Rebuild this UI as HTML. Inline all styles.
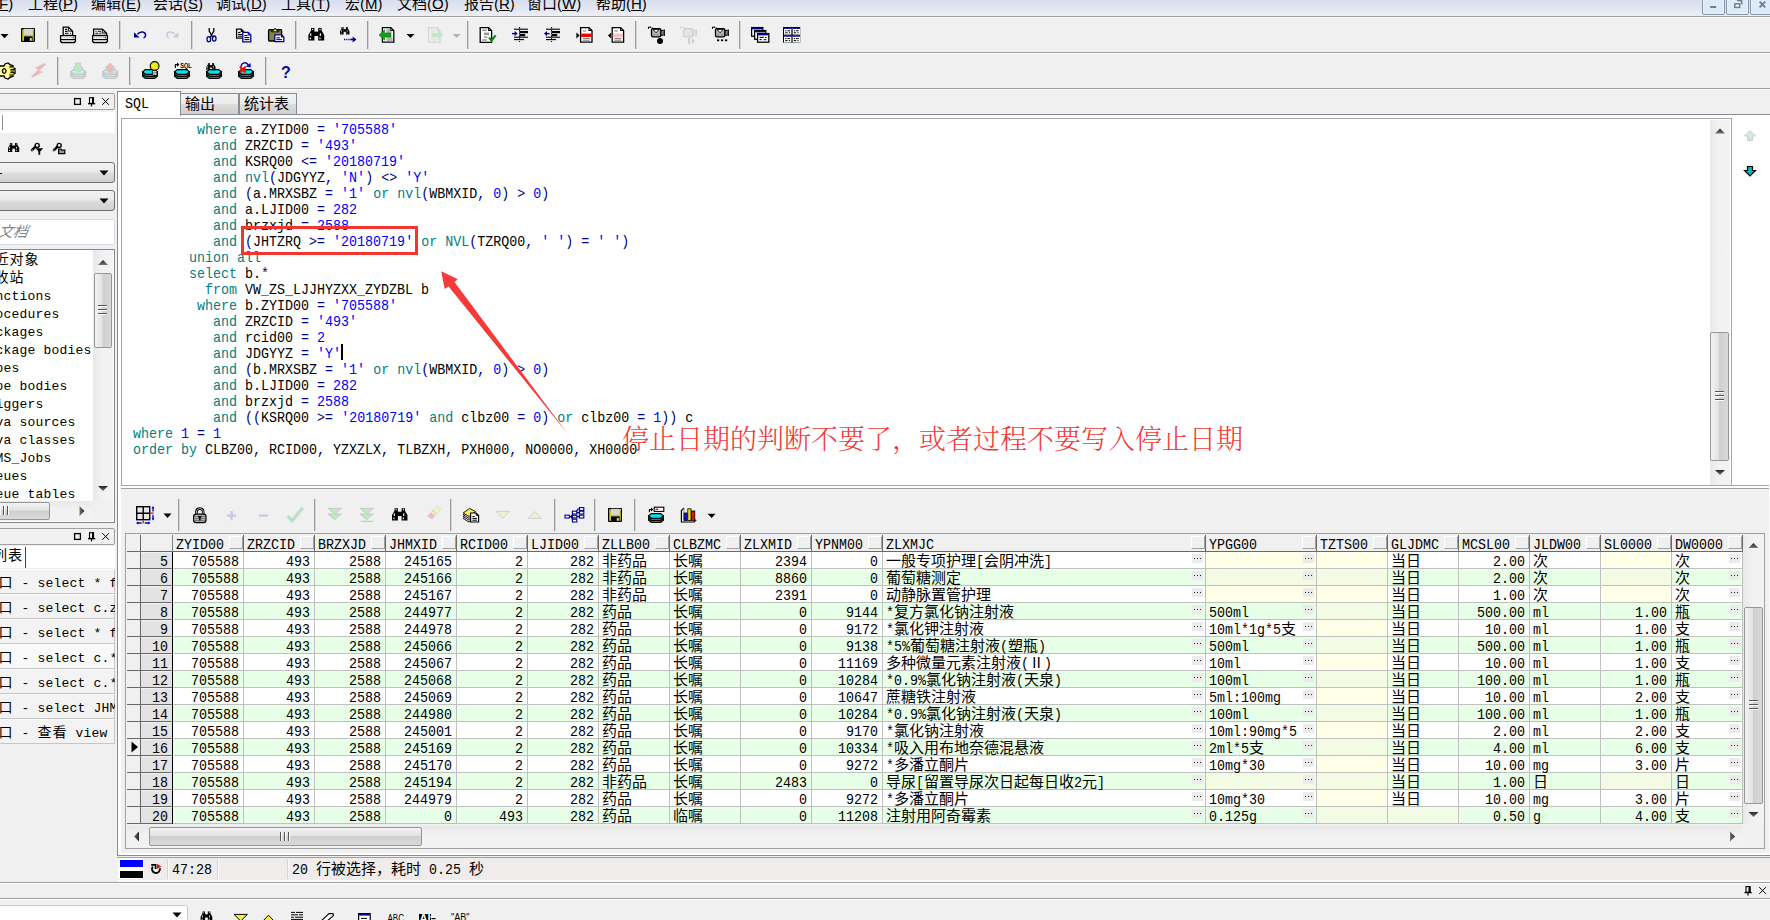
<!DOCTYPE html><html lang="zh"><head><meta charset="utf-8"><title>PL/SQL Developer</title><style>
*{box-sizing:border-box}
html,body{margin:0;padding:0}
body{width:1770px;height:920px;overflow:hidden;background:#f0f0f0;position:relative;font-family:"Liberation Mono","Noto Sans CJK SC",monospace;color:#000}
.a{position:absolute}
.hl{position:absolute;left:0;width:1770px;height:1px}
.mono{font-family:"Liberation Mono","Noto Sans CJK SC",monospace;font-size:15px;white-space:pre}
.sl{transform:scaleX(.8889);transform-origin:0 0}.sr{transform:scaleX(.8889);transform-origin:100% 0}
.l{display:inline-block;vertical-align:baseline;white-space:pre}.l>span{display:inline-block;transform:scaleX(.8889);transform-origin:0 0;white-space:pre}
.cj{font-family:"Liberation Mono","Noto Sans CJK SC",sans-serif;font-size:15px;letter-spacing:0;line-height:0}
.menu{font-family:"Liberation Sans","Noto Sans CJK SC",sans-serif;font-size:15px;white-space:pre;letter-spacing:0}
.menu u{text-decoration-thickness:1px;text-underline-offset:1px}
.sep{position:absolute;width:2px;border-left:1px solid #a0a0a0;border-right:1px solid #fff}
.eb{width:11px;height:9px;background:#ebebeb}.eb i{position:absolute;left:2px;top:4px;width:1.4px;height:1.4px;background:#222;box-shadow:3px 0 0 #222,6px 0 0 #222}
.kw{color:#008080}.bl{color:#0000ff}.pu{color:#000080}
.small{font-family:"Liberation Mono","Noto Sans CJK SC",monospace;font-size:13px;letter-spacing:0.2px;white-space:pre}
.small .cj{font-size:14px;letter-spacing:1px}
</style></head><body>
<div class="a" style="left:0;top:0;width:1770px;height:16px;background:linear-gradient(#d9deee,#e2e6f2 50%,#eef0f8)"></div>
<div class="hl" style="top:16px;background:#a0a0a0"></div><div class="hl" style="top:17px;background:#fff"></div>
<div class="a" style="left:1702px;top:-4px;width:23px;height:19px;border:1px solid #8595a9;border-radius:2px;background:#deeaf6;box-shadow:inset 0 0 0 1px #eaf2fa"></div>
<div class="a" style="left:1726px;top:-4px;width:23px;height:19px;border:1px solid #8595a9;border-radius:2px;background:#deeaf6;box-shadow:inset 0 0 0 1px #eaf2fa"></div>
<div class="a" style="left:1750px;top:-4px;width:23px;height:19px;border:1px solid #8595a9;border-radius:2px;background:#deeaf6;box-shadow:inset 0 0 0 1px #eaf2fa"></div>
<svg class="a" style="left:1700px;top:0" width="70" height="16"><rect x="10.2" y="6" width="6" height="2" fill="#6e7e90"/><path d="M37,0.5h4.6v4" fill="none" stroke="#6e7e90" stroke-width="1.6"/><rect x="34.8" y="3.8" width="4.8" height="3.6" fill="#fff" stroke="#6e7e90" stroke-width="1.5"/><path d="M59.6,1.6l5.6,5.8M65.2,1.6l-5.6,5.8" stroke="#6e7e90" stroke-width="1.9"/></svg>
<div class="a menu" style="left:-6px;top:-7px;line-height:22px">(<u>F</u>)</div>
<div class="a menu" style="left:28px;top:-7px;line-height:22px">工程(<u>P</u>)</div>
<div class="a menu" style="left:91px;top:-7px;line-height:22px">编辑(<u>E</u>)</div>
<div class="a menu" style="left:153px;top:-7px;line-height:22px">会话(<u>S</u>)</div>
<div class="a menu" style="left:216px;top:-7px;line-height:22px">调试(<u>D</u>)</div>
<div class="a menu" style="left:281px;top:-7px;line-height:22px">工具(<u>T</u>)</div>
<div class="a menu" style="left:345px;top:-7px;line-height:22px">宏(<u>M</u>)</div>
<div class="a menu" style="left:397px;top:-7px;line-height:22px">文档(<u>O</u>)</div>
<div class="a menu" style="left:464px;top:-7px;line-height:22px">报告(<u>R</u>)</div>
<div class="a menu" style="left:527px;top:-7px;line-height:22px">窗口(<u>W</u>)</div>
<div class="a menu" style="left:596px;top:-7px;line-height:22px">帮助(<u>H</u>)</div>
<div class="hl" style="top:52px;background:#a0a0a0"></div><div class="hl" style="top:53px;background:#fff"></div>
<div class="hl" style="top:88px;background:#a0a0a0"></div><div class="hl" style="top:89px;background:#fff"></div>
<div class="a" style="left:-2px;top:93px;width:117px;height:17px;border:1px solid #a0a0a0;border-radius:2px;background:#f0f0f0"></div>
<svg class="a" style="left:72px;top:96px" width="42" height="12"><rect x="2.6" y="2.6" width="5.8" height="5.8" fill="none" stroke="#000" stroke-width="1.3"/><rect x="17.5" y="1.7" width="4" height="5.6" fill="#f0f0f0" stroke="#000" stroke-width="1.1"/><rect x="20" y="1.4" width="2" height="6" fill="#000"/><path d="M16,7.7h7.2" stroke="#000" stroke-width="1.3"/><path d="M19.5,8v2.4" stroke="#000" stroke-width="1.2"/><path d="M30.3,2.2l6.6,6.6M36.9,2.2l-6.6,6.6" stroke="#000" stroke-width="1" fill="none"/></svg>
<div class="a" style="left:0;top:112px;width:115px;height:21px;background:#fff"></div>
<div class="a" style="left:2px;top:115px;width:1px;height:15px;background:#909090"></div>
<div class="a" style="left:-4px;top:162px;width:119px;height:21px;border:1px solid #707070;border-radius:3px;background:linear-gradient(#f2f2f2,#ebebeb 48%,#dddddd 52%,#cfcfcf)"></div>
<svg class="a" style="left:99px;top:170px" width="10" height="6"><polygon points="0.5,0.5 9.5,0.5 5,5.5" fill="#000"/></svg>
<div class="a" style="left:-4px;top:190px;width:119px;height:21px;border:1px solid #707070;border-radius:3px;background:linear-gradient(#f2f2f2,#ebebeb 48%,#dddddd 52%,#cfcfcf)"></div>
<svg class="a" style="left:99px;top:198px" width="10" height="6"><polygon points="0.5,0.5 9.5,0.5 5,5.5" fill="#000"/></svg>
<div class="a" style="left:0;top:173px;width:2px;height:1px;background:#0000a0"></div>
<div class="a" style="left:-2px;top:219px;width:117px;height:26px;border:1px solid #d5dbe6;border-radius:2px;background:#fff"></div>
<div class="a" style="left:-2px;top:222px;font:italic 15px/20px 'Liberation Sans','Noto Sans CJK SC',sans-serif;color:#8a8a8a;transform:skewX(-12deg)">文档</div>
<div class="a" style="left:-2px;top:249px;width:117px;height:274px;border:1px solid #828790;background:#fff"></div>
<div class="a" style="left:0;top:250px;width:93px;height:251px;overflow:hidden">
<div class="a small" style="left:-20.5px;top:2px;line-height:18px"><span class="cj">最近对象</span></div>
<div class="a small" style="left:-20.5px;top:20px;line-height:18px"><span class="cj">回收站</span></div>
<div class="a small" style="left:-20.5px;top:38px;line-height:18px">Functions</div>
<div class="a small" style="left:-20.5px;top:56px;line-height:18px">Procedures</div>
<div class="a small" style="left:-20.5px;top:74px;line-height:18px">Packages</div>
<div class="a small" style="left:-20.5px;top:92px;line-height:18px">Package bodies</div>
<div class="a small" style="left:-20.5px;top:110px;line-height:18px">Types</div>
<div class="a small" style="left:-20.5px;top:128px;line-height:18px">Type bodies</div>
<div class="a small" style="left:-20.5px;top:146px;line-height:18px">Triggers</div>
<div class="a small" style="left:-20.5px;top:164px;line-height:18px">Java sources</div>
<div class="a small" style="left:-20.5px;top:182px;line-height:18px">Java classes</div>
<div class="a small" style="left:-20.5px;top:200px;line-height:18px">DBMS_Jobs</div>
<div class="a small" style="left:-20.5px;top:218px;line-height:18px">Queues</div>
<div class="a small" style="left:-20.5px;top:236px;line-height:18px">Queue tables</div>
</div>
<div class="a" style="left:93px;top:250px;width:20px;height:251px;background:linear-gradient(90deg,#e8e8e8,#f1f1f1 40%,#f3f3f3)"></div>
<svg class="a" style="left:93px;top:250px" width="20" height="251"><polygon points="5,15 10,10 15,15" fill="url(#ag)"/><polygon points="5,236 15,236 10,241" fill="url(#ag)"/></svg>
<div class="a" style="left:94px;top:273px;width:18px;height:75px;border:1px solid #979797;border-radius:2px;background:linear-gradient(90deg,#f3f3f3,#e2e2e2 45%,#cfcfcf 50%,#d9d9d9)"></div>
<div class="a" style="left:98px;top:305px;width:9px;height:2px;background:#555;border-bottom:1px solid #fff"></div>
<div class="a" style="left:98px;top:309px;width:9px;height:2px;background:#555;border-bottom:1px solid #fff"></div>
<div class="a" style="left:98px;top:313px;width:9px;height:2px;background:#555;border-bottom:1px solid #fff"></div>
<div class="a" style="left:0;top:501px;width:93px;height:20px;background:linear-gradient(#e8e8e8,#f1f1f1 40%,#f3f3f3)"></div>
<div class="a" style="left:93px;top:501px;width:20px;height:20px;background:#f0f0f0"></div>
<div class="a" style="left:-3px;top:502px;width:53px;height:18px;border:1px solid #979797;border-radius:2px;background:linear-gradient(#f3f3f3,#e2e2e2 45%,#cfcfcf 50%,#d9d9d9)"></div>
<div class="a" style="left:-1px;top:506px;width:2px;height:9px;background:#555;border-right:1px solid #fff"></div>
<div class="a" style="left:3px;top:506px;width:2px;height:9px;background:#555;border-right:1px solid #fff"></div>
<div class="a" style="left:7px;top:506px;width:2px;height:9px;background:#555;border-right:1px solid #fff"></div>
<svg class="a" style="left:76px;top:501px" width="12" height="20"><polygon points="3.5,5 3.5,15 8.5,10" fill="url(#ah)"/></svg>
<div class="a" style="left:-2px;top:528px;width:117px;height:17px;border:1px solid #a0a0a0;border-radius:2px;background:#f0f0f0"></div>
<svg class="a" style="left:72px;top:531px" width="42" height="12"><rect x="2.6" y="2.6" width="5.8" height="5.8" fill="none" stroke="#000" stroke-width="1.3"/><rect x="17.5" y="1.7" width="4" height="5.6" fill="#f0f0f0" stroke="#000" stroke-width="1.1"/><rect x="20" y="1.4" width="2" height="6" fill="#000"/><path d="M16,7.7h7.2" stroke="#000" stroke-width="1.3"/><path d="M19.5,8v2.4" stroke="#000" stroke-width="1.2"/><path d="M30.3,2.2l6.6,6.6M36.9,2.2l-6.6,6.6" stroke="#000" stroke-width="1" fill="none"/></svg>
<div class="a" style="left:0;top:546px;width:115px;height:22px;background:#fff"></div>
<div class="a small" style="left:-7px;top:548px;line-height:18px"><span class="cj">列表</span></div>
<div class="a" style="left:25px;top:547px;width:1px;height:21px;background:#404040"></div>
<div class="a" style="left:0;top:569px;width:115px;height:176px;overflow:hidden">
<div class="a" style="left:-2px;top:0px;width:117px;height:25px;background:#f3f3f3;border:1px solid #c6c6c6;border-top-color:#fafafa"></div>
<div class="a small" style="left:-1.5px;top:6px;line-height:18px"><span class="cj">口</span> - select * f</div>
<div class="a" style="left:-2px;top:25px;width:117px;height:25px;background:#f3f3f3;border:1px solid #c6c6c6;border-top-color:#fafafa"></div>
<div class="a small" style="left:-1.5px;top:31px;line-height:18px"><span class="cj">口</span> - select c.z</div>
<div class="a" style="left:-2px;top:50px;width:117px;height:25px;background:#f3f3f3;border:1px solid #c6c6c6;border-top-color:#fafafa"></div>
<div class="a small" style="left:-1.5px;top:56px;line-height:18px"><span class="cj">口</span> - select * f</div>
<div class="a" style="left:-2px;top:75px;width:117px;height:25px;background:#f9f9f9;border:1px solid #c6c6c6;border-top-color:#fafafa"></div>
<div class="a small" style="left:-1.5px;top:81px;line-height:18px"><span class="cj">口</span> - select c.*</div>
<div class="a" style="left:-2px;top:100px;width:117px;height:25px;background:#f3f3f3;border:1px solid #c6c6c6;border-top-color:#fafafa"></div>
<div class="a small" style="left:-1.5px;top:106px;line-height:18px"><span class="cj">口</span> - select c.*</div>
<div class="a" style="left:-2px;top:125px;width:117px;height:25px;background:#f3f3f3;border:1px solid #c6c6c6;border-top-color:#fafafa"></div>
<div class="a small" style="left:-1.5px;top:131px;line-height:18px"><span class="cj">口</span> - select JHM</div>
<div class="a" style="left:-2px;top:150px;width:117px;height:25px;background:#f3f3f3;border:1px solid #c6c6c6;border-top-color:#fafafa"></div>
<div class="a small" style="left:-1.5px;top:156px;line-height:18px"><span class="cj">口</span> - <span class="cj">查看</span> view</div>
</div>
<div class="a" style="left:117px;top:114px;width:1653px;height:742px;background:#fff;border-left:1px solid #898c95;border-top:1px solid #898c95;border-bottom:1px solid #898c95"></div>
<div class="a" style="left:180px;top:93px;width:59px;height:22px;border:1px solid #898c95;background:linear-gradient(#f2f2f2,#ebebeb 50%,#dddddd 51%,#cfcfcf)"></div>
<div class="a mono" style="left:185px;top:96px;line-height:20px"><span class="cj">输出</span></div>
<div class="a" style="left:239px;top:93px;width:58px;height:22px;border:1px solid #898c95;background:linear-gradient(#f2f2f2,#ebebeb 50%,#dddddd 51%,#cfcfcf)"></div>
<div class="a mono" style="left:244px;top:96px;line-height:20px"><span class="cj">统计表</span></div>
<div class="a" style="left:117px;top:91px;width:64px;height:25px;border:1px solid #898c95;border-bottom:none;background:#fff"></div>
<div class="a mono sl" style="left:125px;top:95px;line-height:20px">SQL</div>
<div class="a" style="left:121px;top:488px;width:1648px;height:365px;background:#f0f0f0;border-top:1px solid #a0a0a0"></div>
<div class="a" style="left:121px;top:118px;width:1611px;height:368px;border:1px solid #a3a7b0;background:#fff"></div>
<pre class="a mono sl" style="left:133px;top:123px;margin:0;line-height:16px">        <span class="kw">where</span> a.ZYID00 <span class="pu">=</span> <span class="bl">'705588'</span>
          <span class="kw">and</span> ZRZCID <span class="pu">=</span> <span class="bl">'493'</span>
          <span class="kw">and</span> KSRQ00 <span class="pu">&lt;</span><span class="pu">=</span> <span class="bl">'20180719'</span>
          <span class="kw">and</span> <span class="kw">nvl</span><span class="pu">(</span>JDGYYZ<span class="pu">,</span> <span class="bl">'N'</span><span class="pu">)</span> <span class="pu">&lt;</span><span class="pu">&gt;</span> <span class="bl">'Y'</span>
          <span class="kw">and</span> <span class="pu">(</span>a.MRXSBZ <span class="pu">=</span> <span class="bl">'1'</span> <span class="kw">or</span> <span class="kw">nvl</span><span class="pu">(</span>WBMXID<span class="pu">,</span> <span class="bl">0</span><span class="pu">)</span> <span class="pu">&gt;</span> <span class="bl">0</span><span class="pu">)</span>
          <span class="kw">and</span> a.LJID00 <span class="pu">=</span> <span class="bl">282</span>
          <span class="kw">and</span> brzxjd <span class="pu">=</span> <span class="bl">2588</span>
          <span class="kw">and</span> <span class="pu">(</span>JHTZRQ <span class="pu">&gt;</span><span class="pu">=</span> <span class="bl">'20180719'</span> <span class="kw">or</span> <span class="kw">NVL</span><span class="pu">(</span>TZRQ00<span class="pu">,</span> <span class="bl">' '</span><span class="pu">)</span> <span class="pu">=</span> <span class="bl">' '</span><span class="pu">)</span>
       <span class="kw">union</span> <span class="kw">all</span>
       <span class="kw">select</span> b.<span class="pu">*</span>
         <span class="kw">from</span> VW_ZS_LJJHYZXX_ZYDZBL b
        <span class="kw">where</span> b.ZYID00 <span class="pu">=</span> <span class="bl">'705588'</span>
          <span class="kw">and</span> ZRZCID <span class="pu">=</span> <span class="bl">'493'</span>
          <span class="kw">and</span> rcid00 <span class="pu">=</span> <span class="bl">2</span>
          <span class="kw">and</span> JDGYYZ <span class="pu">=</span> <span class="bl">'Y'</span>
          <span class="kw">and</span> <span class="pu">(</span>b.MRXSBZ <span class="pu">=</span> <span class="bl">'1'</span> <span class="kw">or</span> <span class="kw">nvl</span><span class="pu">(</span>WBMXID<span class="pu">,</span> <span class="bl">0</span><span class="pu">)</span> <span class="pu">&gt;</span> <span class="bl">0</span><span class="pu">)</span>
          <span class="kw">and</span> b.LJID00 <span class="pu">=</span> <span class="bl">282</span>
          <span class="kw">and</span> brzxjd <span class="pu">=</span> <span class="bl">2588</span>
          <span class="kw">and</span> <span class="pu">(</span><span class="pu">(</span>KSRQ00 <span class="pu">&gt;</span><span class="pu">=</span> <span class="bl">'20180719'</span> <span class="kw">and</span> clbz00 <span class="pu">=</span> <span class="bl">0</span><span class="pu">)</span> <span class="kw">or</span> clbz00 <span class="pu">=</span> <span class="bl">1</span><span class="pu">)</span><span class="pu">)</span> c
<span class="kw">where</span> <span class="bl">1</span> <span class="pu">=</span> <span class="bl">1</span>
<span class="kw">order</span> <span class="kw">by</span> CLBZ00<span class="pu">,</span> RCID00<span class="pu">,</span> YZXZLX<span class="pu">,</span> TLBZXH<span class="pu">,</span> PXH000<span class="pu">,</span> NO0000<span class="pu">,</span> XH0000</pre>
<div class="a" style="left:341px;top:344px;width:2px;height:16px;background:#000"></div>
<div class="a" style="left:241px;top:226px;width:177px;height:29px;border:3px solid #f3352f"></div>
<svg class="a" style="left:430px;top:260px" width="160" height="180" viewBox="430 260 160 180"><polygon points="441.2,271.2 457.8,279.2 454.5,282 567.6,433.8 448.6,286.4 444.7,289" fill="#f53a3a"/></svg>
<div class="a" style="left:622px;top:422px;font:300 27px/36px 'Liberation Serif','Noto Serif CJK SC',serif;color:#f23a35;white-space:pre">停止日期的判断不要了，或者过程不要写入停止日期</div>
<div class="a" style="left:1710px;top:120px;width:20px;height:365px;background:linear-gradient(90deg,#e8e8e8,#f1f1f1 40%,#f3f3f3)"></div>
<svg class="a" style="left:1710px;top:120px" width="20" height="365"><defs><linearGradient id="ag" x1="0" y1="0" x2="0" y2="1"><stop offset="0" stop-color="#222"/><stop offset="1" stop-color="#777"/></linearGradient></defs><polygon points="5,13.5 10,8.5 15,13.5" fill="url(#ag)"/><polygon points="5,350 15,350 10,355" fill="url(#ag)"/></svg>
<div class="a" style="left:1710px;top:332px;width:19px;height:129px;border:1px solid #979797;border-radius:2px;background:linear-gradient(90deg,#f3f3f3,#e2e2e2 45%,#cfcfcf 50%,#d9d9d9)"></div>
<div class="a" style="left:1715px;top:391px;width:9px;height:2px;background:#555;border-bottom:1px solid #fff"></div>
<div class="a" style="left:1715px;top:395px;width:9px;height:2px;background:#555;border-bottom:1px solid #fff"></div>
<div class="a" style="left:1715px;top:399px;width:9px;height:2px;background:#555;border-bottom:1px solid #fff"></div>
<svg class="a" style="left:1742px;top:128px" width="16" height="52"><polygon points="8,2.5 13.5,8 10.5,8 10.5,12.5 5.5,12.5 5.5,8 2.5,8" fill="#cfe9e9" stroke="#c8d0d0" stroke-width="1"/><polygon points="5.5,38.5 10.5,38.5 10.5,42.5 13.5,42.5 8,48 2.5,42.5 5.5,42.5" fill="#00b8c0" stroke="#000" stroke-width="1.2"/></svg>
<div class="a" style="left:125px;top:533px;width:1640px;height:316px;border:1px solid #a0a0a0;background:#f0f0f0"></div>
<div class="a" style="left:127px;top:535px;width:1616px;height:16px;background:#f0f0f0"></div>
<div class="a" style="left:127px;top:551px;width:1616px;height:1px;background:#696969"></div>
<div class="a" style="left:140px;top:535px;width:1px;height:289px;background:#696969"></div>
<div class="a" style="left:172px;top:535px;width:1px;height:17px;background:#808080"></div>
<div class="a" style="left:172px;top:552px;width:1px;height:272px;background:#000"></div>
<div class="a" style="left:243px;top:535px;width:1px;height:16px;background:#696969"></div>
<div class="a mono sl" style="left:176px;top:538px;line-height:16px">ZYID00</div>
<div class="a" style="left:229px;top:536px;width:14px;height:13px;background:#f0f0f0;border-right:1px solid #a0a0a0;border-bottom:1px solid #a0a0a0;border-left:1px solid #fff;border-top:1px solid #fff"></div>
<div class="a" style="left:314px;top:535px;width:1px;height:16px;background:#696969"></div>
<div class="a mono sl" style="left:247px;top:538px;line-height:16px">ZRZCID</div>
<div class="a" style="left:300px;top:536px;width:14px;height:13px;background:#f0f0f0;border-right:1px solid #a0a0a0;border-bottom:1px solid #a0a0a0;border-left:1px solid #fff;border-top:1px solid #fff"></div>
<div class="a" style="left:385px;top:535px;width:1px;height:16px;background:#696969"></div>
<div class="a mono sl" style="left:318px;top:538px;line-height:16px">BRZXJD</div>
<div class="a" style="left:371px;top:536px;width:14px;height:13px;background:#f0f0f0;border-right:1px solid #a0a0a0;border-bottom:1px solid #a0a0a0;border-left:1px solid #fff;border-top:1px solid #fff"></div>
<div class="a" style="left:456px;top:535px;width:1px;height:16px;background:#696969"></div>
<div class="a mono sl" style="left:389px;top:538px;line-height:16px">JHMXID</div>
<div class="a" style="left:442px;top:536px;width:14px;height:13px;background:#f0f0f0;border-right:1px solid #a0a0a0;border-bottom:1px solid #a0a0a0;border-left:1px solid #fff;border-top:1px solid #fff"></div>
<div class="a" style="left:527px;top:535px;width:1px;height:16px;background:#696969"></div>
<div class="a mono sl" style="left:460px;top:538px;line-height:16px">RCID00</div>
<div class="a" style="left:513px;top:536px;width:14px;height:13px;background:#f0f0f0;border-right:1px solid #a0a0a0;border-bottom:1px solid #a0a0a0;border-left:1px solid #fff;border-top:1px solid #fff"></div>
<div class="a" style="left:598px;top:535px;width:1px;height:16px;background:#696969"></div>
<div class="a mono sl" style="left:531px;top:538px;line-height:16px">LJID00</div>
<div class="a" style="left:584px;top:536px;width:14px;height:13px;background:#f0f0f0;border-right:1px solid #a0a0a0;border-bottom:1px solid #a0a0a0;border-left:1px solid #fff;border-top:1px solid #fff"></div>
<div class="a" style="left:669px;top:535px;width:1px;height:16px;background:#696969"></div>
<div class="a mono sl" style="left:602px;top:538px;line-height:16px">ZLLB00</div>
<div class="a" style="left:655px;top:536px;width:14px;height:13px;background:#f0f0f0;border-right:1px solid #a0a0a0;border-bottom:1px solid #a0a0a0;border-left:1px solid #fff;border-top:1px solid #fff"></div>
<div class="a" style="left:740px;top:535px;width:1px;height:16px;background:#696969"></div>
<div class="a mono sl" style="left:673px;top:538px;line-height:16px">CLBZMC</div>
<div class="a" style="left:726px;top:536px;width:14px;height:13px;background:#f0f0f0;border-right:1px solid #a0a0a0;border-bottom:1px solid #a0a0a0;border-left:1px solid #fff;border-top:1px solid #fff"></div>
<div class="a" style="left:811px;top:535px;width:1px;height:16px;background:#696969"></div>
<div class="a mono sl" style="left:744px;top:538px;line-height:16px">ZLXMID</div>
<div class="a" style="left:797px;top:536px;width:14px;height:13px;background:#f0f0f0;border-right:1px solid #a0a0a0;border-bottom:1px solid #a0a0a0;border-left:1px solid #fff;border-top:1px solid #fff"></div>
<div class="a" style="left:882px;top:535px;width:1px;height:16px;background:#696969"></div>
<div class="a mono sl" style="left:815px;top:538px;line-height:16px">YPNM00</div>
<div class="a" style="left:868px;top:536px;width:14px;height:13px;background:#f0f0f0;border-right:1px solid #a0a0a0;border-bottom:1px solid #a0a0a0;border-left:1px solid #fff;border-top:1px solid #fff"></div>
<div class="a" style="left:1205px;top:535px;width:1px;height:16px;background:#696969"></div>
<div class="a mono sl" style="left:886px;top:538px;line-height:16px">ZLXMJC</div>
<div class="a" style="left:1191px;top:536px;width:14px;height:13px;background:#f0f0f0;border-right:1px solid #a0a0a0;border-bottom:1px solid #a0a0a0;border-left:1px solid #fff;border-top:1px solid #fff"></div>
<div class="a" style="left:1316px;top:535px;width:1px;height:16px;background:#696969"></div>
<div class="a mono sl" style="left:1209px;top:538px;line-height:16px">YPGG00</div>
<div class="a" style="left:1302px;top:536px;width:14px;height:13px;background:#f0f0f0;border-right:1px solid #a0a0a0;border-bottom:1px solid #a0a0a0;border-left:1px solid #fff;border-top:1px solid #fff"></div>
<div class="a" style="left:1387px;top:535px;width:1px;height:16px;background:#696969"></div>
<div class="a mono sl" style="left:1320px;top:538px;line-height:16px">TZTS00</div>
<div class="a" style="left:1373px;top:536px;width:14px;height:13px;background:#f0f0f0;border-right:1px solid #a0a0a0;border-bottom:1px solid #a0a0a0;border-left:1px solid #fff;border-top:1px solid #fff"></div>
<div class="a" style="left:1458px;top:535px;width:1px;height:16px;background:#696969"></div>
<div class="a mono sl" style="left:1391px;top:538px;line-height:16px">GLJDMC</div>
<div class="a" style="left:1444px;top:536px;width:14px;height:13px;background:#f0f0f0;border-right:1px solid #a0a0a0;border-bottom:1px solid #a0a0a0;border-left:1px solid #fff;border-top:1px solid #fff"></div>
<div class="a" style="left:1529px;top:535px;width:1px;height:16px;background:#696969"></div>
<div class="a mono sl" style="left:1462px;top:538px;line-height:16px">MCSL00</div>
<div class="a" style="left:1515px;top:536px;width:14px;height:13px;background:#f0f0f0;border-right:1px solid #a0a0a0;border-bottom:1px solid #a0a0a0;border-left:1px solid #fff;border-top:1px solid #fff"></div>
<div class="a" style="left:1600px;top:535px;width:1px;height:16px;background:#696969"></div>
<div class="a mono sl" style="left:1533px;top:538px;line-height:16px">JLDW00</div>
<div class="a" style="left:1586px;top:536px;width:14px;height:13px;background:#f0f0f0;border-right:1px solid #a0a0a0;border-bottom:1px solid #a0a0a0;border-left:1px solid #fff;border-top:1px solid #fff"></div>
<div class="a" style="left:1671px;top:535px;width:1px;height:16px;background:#696969"></div>
<div class="a mono sl" style="left:1604px;top:538px;line-height:16px">SL0000</div>
<div class="a" style="left:1657px;top:536px;width:14px;height:13px;background:#f0f0f0;border-right:1px solid #a0a0a0;border-bottom:1px solid #a0a0a0;border-left:1px solid #fff;border-top:1px solid #fff"></div>
<div class="a" style="left:1742px;top:535px;width:1px;height:16px;background:#696969"></div>
<div class="a mono sl" style="left:1675px;top:538px;line-height:16px">DW0000</div>
<div class="a" style="left:1728px;top:536px;width:14px;height:13px;background:#f0f0f0;border-right:1px solid #a0a0a0;border-bottom:1px solid #a0a0a0;border-left:1px solid #fff;border-top:1px solid #fff"></div>
<div class="a" style="left:127px;top:568px;width:45px;height:1px;background:#696969"></div>
<div class="a" style="left:141px;top:553px;width:31px;height:15px;background:#e3e3e3"></div>
<div class="a mono sr" style="left:141px;top:555px;width:27px;text-align:right;line-height:16px">5</div>
<div class="a" style="left:173px;top:552px;width:1570px;height:16px;background:#fff"></div>
<div class="a" style="left:173px;top:568px;width:1570px;height:1px;background:#c0c0c0"></div>
<div class="a mono sr" style="left:173px;top:555px;width:66px;text-align:right;line-height:16px">705588</div>
<div class="a mono sr" style="left:244px;top:555px;width:66px;text-align:right;line-height:16px">493</div>
<div class="a mono sr" style="left:315px;top:555px;width:66px;text-align:right;line-height:16px">2588</div>
<div class="a mono sr" style="left:386px;top:555px;width:66px;text-align:right;line-height:16px">245165</div>
<div class="a mono sr" style="left:457px;top:555px;width:66px;text-align:right;line-height:16px">2</div>
<div class="a mono sr" style="left:528px;top:555px;width:66px;text-align:right;line-height:16px">282</div>
<div class="a mono" style="left:602px;top:555px;line-height:16px"><span class="cj">非药品</span></div>
<div class="a mono" style="left:673px;top:555px;line-height:16px"><span class="cj">长嘱</span></div>
<div class="a mono sr" style="left:741px;top:555px;width:66px;text-align:right;line-height:16px">2394</div>
<div class="a mono sr" style="left:812px;top:555px;width:66px;text-align:right;line-height:16px">0</div>
<div class="a mono" style="left:886px;top:555px;line-height:16px"><span class="cj">一般专项护理</span><span class="l" style="width:8px"><span>[</span></span><span class="cj">会阴冲洗</span><span class="l" style="width:8px"><span>]</span></span></div>
<div class="a eb" style="left:1192px;top:554px"><i></i></div>
<div class="a" style="left:1206px;top:552px;width:110px;height:16px;background:#ffffe8"></div>
<div class="a eb" style="left:1303px;top:554px"><i></i></div>
<div class="a" style="left:1317px;top:552px;width:70px;height:16px;background:#ffffe8"></div>
<div class="a mono" style="left:1391px;top:555px;line-height:16px"><span class="cj">当日</span></div>
<div class="a mono sr" style="left:1459px;top:555px;width:66px;text-align:right;line-height:16px">2.00</div>
<div class="a mono" style="left:1533px;top:555px;line-height:16px"><span class="cj">次</span></div>
<div class="a" style="left:1601px;top:552px;width:70px;height:16px;background:#ffffe8"></div>
<div class="a mono" style="left:1675px;top:555px;line-height:16px"><span class="cj">次</span></div>
<div class="a eb" style="left:1729px;top:554px"><i></i></div>
<div class="a" style="left:127px;top:585px;width:45px;height:1px;background:#696969"></div>
<div class="a" style="left:141px;top:570px;width:31px;height:15px;background:#e3e3e3"></div>
<div class="a mono sr" style="left:141px;top:572px;width:27px;text-align:right;line-height:16px">6</div>
<div class="a" style="left:173px;top:569px;width:1570px;height:16px;background:#e6ffe6"></div>
<div class="a" style="left:173px;top:585px;width:1570px;height:1px;background:#c0c0c0"></div>
<div class="a mono sr" style="left:173px;top:572px;width:66px;text-align:right;line-height:16px">705588</div>
<div class="a mono sr" style="left:244px;top:572px;width:66px;text-align:right;line-height:16px">493</div>
<div class="a mono sr" style="left:315px;top:572px;width:66px;text-align:right;line-height:16px">2588</div>
<div class="a mono sr" style="left:386px;top:572px;width:66px;text-align:right;line-height:16px">245166</div>
<div class="a mono sr" style="left:457px;top:572px;width:66px;text-align:right;line-height:16px">2</div>
<div class="a mono sr" style="left:528px;top:572px;width:66px;text-align:right;line-height:16px">282</div>
<div class="a mono" style="left:602px;top:572px;line-height:16px"><span class="cj">非药品</span></div>
<div class="a mono" style="left:673px;top:572px;line-height:16px"><span class="cj">长嘱</span></div>
<div class="a mono sr" style="left:741px;top:572px;width:66px;text-align:right;line-height:16px">8860</div>
<div class="a mono sr" style="left:812px;top:572px;width:66px;text-align:right;line-height:16px">0</div>
<div class="a mono" style="left:886px;top:572px;line-height:16px"><span class="cj">葡萄糖测定</span></div>
<div class="a eb" style="left:1192px;top:571px"><i></i></div>
<div class="a" style="left:1206px;top:569px;width:110px;height:16px;background:#f3fbe5"></div>
<div class="a eb" style="left:1303px;top:571px"><i></i></div>
<div class="a" style="left:1317px;top:569px;width:70px;height:16px;background:#f3fbe5"></div>
<div class="a mono" style="left:1391px;top:572px;line-height:16px"><span class="cj">当日</span></div>
<div class="a mono sr" style="left:1459px;top:572px;width:66px;text-align:right;line-height:16px">2.00</div>
<div class="a mono" style="left:1533px;top:572px;line-height:16px"><span class="cj">次</span></div>
<div class="a" style="left:1601px;top:569px;width:70px;height:16px;background:#f3fbe5"></div>
<div class="a mono" style="left:1675px;top:572px;line-height:16px"><span class="cj">次</span></div>
<div class="a eb" style="left:1729px;top:571px"><i></i></div>
<div class="a" style="left:127px;top:602px;width:45px;height:1px;background:#696969"></div>
<div class="a" style="left:141px;top:587px;width:31px;height:15px;background:#e3e3e3"></div>
<div class="a mono sr" style="left:141px;top:589px;width:27px;text-align:right;line-height:16px">7</div>
<div class="a" style="left:173px;top:586px;width:1570px;height:16px;background:#fff"></div>
<div class="a" style="left:173px;top:602px;width:1570px;height:1px;background:#c0c0c0"></div>
<div class="a mono sr" style="left:173px;top:589px;width:66px;text-align:right;line-height:16px">705588</div>
<div class="a mono sr" style="left:244px;top:589px;width:66px;text-align:right;line-height:16px">493</div>
<div class="a mono sr" style="left:315px;top:589px;width:66px;text-align:right;line-height:16px">2588</div>
<div class="a mono sr" style="left:386px;top:589px;width:66px;text-align:right;line-height:16px">245167</div>
<div class="a mono sr" style="left:457px;top:589px;width:66px;text-align:right;line-height:16px">2</div>
<div class="a mono sr" style="left:528px;top:589px;width:66px;text-align:right;line-height:16px">282</div>
<div class="a mono" style="left:602px;top:589px;line-height:16px"><span class="cj">非药品</span></div>
<div class="a mono" style="left:673px;top:589px;line-height:16px"><span class="cj">长嘱</span></div>
<div class="a mono sr" style="left:741px;top:589px;width:66px;text-align:right;line-height:16px">2391</div>
<div class="a mono sr" style="left:812px;top:589px;width:66px;text-align:right;line-height:16px">0</div>
<div class="a mono" style="left:886px;top:589px;line-height:16px"><span class="cj">动静脉置管护理</span></div>
<div class="a eb" style="left:1192px;top:588px"><i></i></div>
<div class="a" style="left:1206px;top:586px;width:110px;height:16px;background:#ffffe8"></div>
<div class="a eb" style="left:1303px;top:588px"><i></i></div>
<div class="a" style="left:1317px;top:586px;width:70px;height:16px;background:#ffffe8"></div>
<div class="a mono" style="left:1391px;top:589px;line-height:16px"><span class="cj">当日</span></div>
<div class="a mono sr" style="left:1459px;top:589px;width:66px;text-align:right;line-height:16px">1.00</div>
<div class="a mono" style="left:1533px;top:589px;line-height:16px"><span class="cj">次</span></div>
<div class="a" style="left:1601px;top:586px;width:70px;height:16px;background:#ffffe8"></div>
<div class="a mono" style="left:1675px;top:589px;line-height:16px"><span class="cj">次</span></div>
<div class="a eb" style="left:1729px;top:588px"><i></i></div>
<div class="a" style="left:127px;top:619px;width:45px;height:1px;background:#696969"></div>
<div class="a" style="left:141px;top:604px;width:31px;height:15px;background:#e3e3e3"></div>
<div class="a mono sr" style="left:141px;top:606px;width:27px;text-align:right;line-height:16px">8</div>
<div class="a" style="left:173px;top:603px;width:1570px;height:16px;background:#e6ffe6"></div>
<div class="a" style="left:173px;top:619px;width:1570px;height:1px;background:#c0c0c0"></div>
<div class="a mono sr" style="left:173px;top:606px;width:66px;text-align:right;line-height:16px">705588</div>
<div class="a mono sr" style="left:244px;top:606px;width:66px;text-align:right;line-height:16px">493</div>
<div class="a mono sr" style="left:315px;top:606px;width:66px;text-align:right;line-height:16px">2588</div>
<div class="a mono sr" style="left:386px;top:606px;width:66px;text-align:right;line-height:16px">244977</div>
<div class="a mono sr" style="left:457px;top:606px;width:66px;text-align:right;line-height:16px">2</div>
<div class="a mono sr" style="left:528px;top:606px;width:66px;text-align:right;line-height:16px">282</div>
<div class="a mono" style="left:602px;top:606px;line-height:16px"><span class="cj">药品</span></div>
<div class="a mono" style="left:673px;top:606px;line-height:16px"><span class="cj">长嘱</span></div>
<div class="a mono sr" style="left:741px;top:606px;width:66px;text-align:right;line-height:16px">0</div>
<div class="a mono sr" style="left:812px;top:606px;width:66px;text-align:right;line-height:16px">9144</div>
<div class="a mono" style="left:886px;top:606px;line-height:16px"><span class="l" style="width:8px"><span>*</span></span><span class="cj">复方氯化钠注射液</span></div>
<div class="a eb" style="left:1192px;top:605px"><i></i></div>
<div class="a mono sl" style="left:1209px;top:606px;line-height:16px">500ml</div>
<div class="a eb" style="left:1303px;top:605px"><i></i></div>
<div class="a" style="left:1317px;top:603px;width:70px;height:16px;background:#f3fbe5"></div>
<div class="a mono" style="left:1391px;top:606px;line-height:16px"><span class="cj">当日</span></div>
<div class="a mono sr" style="left:1459px;top:606px;width:66px;text-align:right;line-height:16px">500.00</div>
<div class="a mono sl" style="left:1533px;top:606px;line-height:16px">ml</div>
<div class="a mono sr" style="left:1601px;top:606px;width:66px;text-align:right;line-height:16px">1.00</div>
<div class="a mono" style="left:1675px;top:606px;line-height:16px"><span class="cj">瓶</span></div>
<div class="a eb" style="left:1729px;top:605px"><i></i></div>
<div class="a" style="left:127px;top:636px;width:45px;height:1px;background:#696969"></div>
<div class="a" style="left:141px;top:621px;width:31px;height:15px;background:#e3e3e3"></div>
<div class="a mono sr" style="left:141px;top:623px;width:27px;text-align:right;line-height:16px">9</div>
<div class="a" style="left:173px;top:620px;width:1570px;height:16px;background:#fff"></div>
<div class="a" style="left:173px;top:636px;width:1570px;height:1px;background:#c0c0c0"></div>
<div class="a mono sr" style="left:173px;top:623px;width:66px;text-align:right;line-height:16px">705588</div>
<div class="a mono sr" style="left:244px;top:623px;width:66px;text-align:right;line-height:16px">493</div>
<div class="a mono sr" style="left:315px;top:623px;width:66px;text-align:right;line-height:16px">2588</div>
<div class="a mono sr" style="left:386px;top:623px;width:66px;text-align:right;line-height:16px">244978</div>
<div class="a mono sr" style="left:457px;top:623px;width:66px;text-align:right;line-height:16px">2</div>
<div class="a mono sr" style="left:528px;top:623px;width:66px;text-align:right;line-height:16px">282</div>
<div class="a mono" style="left:602px;top:623px;line-height:16px"><span class="cj">药品</span></div>
<div class="a mono" style="left:673px;top:623px;line-height:16px"><span class="cj">长嘱</span></div>
<div class="a mono sr" style="left:741px;top:623px;width:66px;text-align:right;line-height:16px">0</div>
<div class="a mono sr" style="left:812px;top:623px;width:66px;text-align:right;line-height:16px">9172</div>
<div class="a mono" style="left:886px;top:623px;line-height:16px"><span class="l" style="width:8px"><span>*</span></span><span class="cj">氯化钾注射液</span></div>
<div class="a eb" style="left:1192px;top:622px"><i></i></div>
<div class="a mono" style="left:1209px;top:623px;line-height:16px"><span class="l" style="width:72px"><span>10ml*1g*5</span></span><span class="cj">支</span></div>
<div class="a eb" style="left:1303px;top:622px"><i></i></div>
<div class="a" style="left:1317px;top:620px;width:70px;height:16px;background:#ffffe8"></div>
<div class="a mono" style="left:1391px;top:623px;line-height:16px"><span class="cj">当日</span></div>
<div class="a mono sr" style="left:1459px;top:623px;width:66px;text-align:right;line-height:16px">10.00</div>
<div class="a mono sl" style="left:1533px;top:623px;line-height:16px">ml</div>
<div class="a mono sr" style="left:1601px;top:623px;width:66px;text-align:right;line-height:16px">1.00</div>
<div class="a mono" style="left:1675px;top:623px;line-height:16px"><span class="cj">支</span></div>
<div class="a eb" style="left:1729px;top:622px"><i></i></div>
<div class="a" style="left:127px;top:653px;width:45px;height:1px;background:#696969"></div>
<div class="a" style="left:141px;top:638px;width:31px;height:15px;background:#e3e3e3"></div>
<div class="a mono sr" style="left:141px;top:640px;width:27px;text-align:right;line-height:16px">10</div>
<div class="a" style="left:173px;top:637px;width:1570px;height:16px;background:#e6ffe6"></div>
<div class="a" style="left:173px;top:653px;width:1570px;height:1px;background:#c0c0c0"></div>
<div class="a mono sr" style="left:173px;top:640px;width:66px;text-align:right;line-height:16px">705588</div>
<div class="a mono sr" style="left:244px;top:640px;width:66px;text-align:right;line-height:16px">493</div>
<div class="a mono sr" style="left:315px;top:640px;width:66px;text-align:right;line-height:16px">2588</div>
<div class="a mono sr" style="left:386px;top:640px;width:66px;text-align:right;line-height:16px">245066</div>
<div class="a mono sr" style="left:457px;top:640px;width:66px;text-align:right;line-height:16px">2</div>
<div class="a mono sr" style="left:528px;top:640px;width:66px;text-align:right;line-height:16px">282</div>
<div class="a mono" style="left:602px;top:640px;line-height:16px"><span class="cj">药品</span></div>
<div class="a mono" style="left:673px;top:640px;line-height:16px"><span class="cj">长嘱</span></div>
<div class="a mono sr" style="left:741px;top:640px;width:66px;text-align:right;line-height:16px">0</div>
<div class="a mono sr" style="left:812px;top:640px;width:66px;text-align:right;line-height:16px">9138</div>
<div class="a mono" style="left:886px;top:640px;line-height:16px"><span class="l" style="width:24px"><span>*5%</span></span><span class="cj">葡萄糖注射液</span><span class="l" style="width:8px"><span>(</span></span><span class="cj">塑瓶</span><span class="l" style="width:8px"><span>)</span></span></div>
<div class="a eb" style="left:1192px;top:639px"><i></i></div>
<div class="a mono sl" style="left:1209px;top:640px;line-height:16px">500ml</div>
<div class="a eb" style="left:1303px;top:639px"><i></i></div>
<div class="a" style="left:1317px;top:637px;width:70px;height:16px;background:#f3fbe5"></div>
<div class="a mono" style="left:1391px;top:640px;line-height:16px"><span class="cj">当日</span></div>
<div class="a mono sr" style="left:1459px;top:640px;width:66px;text-align:right;line-height:16px">500.00</div>
<div class="a mono sl" style="left:1533px;top:640px;line-height:16px">ml</div>
<div class="a mono sr" style="left:1601px;top:640px;width:66px;text-align:right;line-height:16px">1.00</div>
<div class="a mono" style="left:1675px;top:640px;line-height:16px"><span class="cj">瓶</span></div>
<div class="a eb" style="left:1729px;top:639px"><i></i></div>
<div class="a" style="left:127px;top:670px;width:45px;height:1px;background:#696969"></div>
<div class="a" style="left:141px;top:655px;width:31px;height:15px;background:#e3e3e3"></div>
<div class="a mono sr" style="left:141px;top:657px;width:27px;text-align:right;line-height:16px">11</div>
<div class="a" style="left:173px;top:654px;width:1570px;height:16px;background:#fff"></div>
<div class="a" style="left:173px;top:670px;width:1570px;height:1px;background:#c0c0c0"></div>
<div class="a mono sr" style="left:173px;top:657px;width:66px;text-align:right;line-height:16px">705588</div>
<div class="a mono sr" style="left:244px;top:657px;width:66px;text-align:right;line-height:16px">493</div>
<div class="a mono sr" style="left:315px;top:657px;width:66px;text-align:right;line-height:16px">2588</div>
<div class="a mono sr" style="left:386px;top:657px;width:66px;text-align:right;line-height:16px">245067</div>
<div class="a mono sr" style="left:457px;top:657px;width:66px;text-align:right;line-height:16px">2</div>
<div class="a mono sr" style="left:528px;top:657px;width:66px;text-align:right;line-height:16px">282</div>
<div class="a mono" style="left:602px;top:657px;line-height:16px"><span class="cj">药品</span></div>
<div class="a mono" style="left:673px;top:657px;line-height:16px"><span class="cj">长嘱</span></div>
<div class="a mono sr" style="left:741px;top:657px;width:66px;text-align:right;line-height:16px">0</div>
<div class="a mono sr" style="left:812px;top:657px;width:66px;text-align:right;line-height:16px">11169</div>
<div class="a mono" style="left:886px;top:657px;line-height:16px"><span class="cj">多种微量元素注射液</span><span class="l" style="width:8px"><span>(</span></span><span class="cj">Ⅱ</span><span class="l" style="width:8px"><span>)</span></span></div>
<div class="a eb" style="left:1192px;top:656px"><i></i></div>
<div class="a mono sl" style="left:1209px;top:657px;line-height:16px">10ml</div>
<div class="a eb" style="left:1303px;top:656px"><i></i></div>
<div class="a" style="left:1317px;top:654px;width:70px;height:16px;background:#ffffe8"></div>
<div class="a mono" style="left:1391px;top:657px;line-height:16px"><span class="cj">当日</span></div>
<div class="a mono sr" style="left:1459px;top:657px;width:66px;text-align:right;line-height:16px">10.00</div>
<div class="a mono sl" style="left:1533px;top:657px;line-height:16px">ml</div>
<div class="a mono sr" style="left:1601px;top:657px;width:66px;text-align:right;line-height:16px">1.00</div>
<div class="a mono" style="left:1675px;top:657px;line-height:16px"><span class="cj">支</span></div>
<div class="a eb" style="left:1729px;top:656px"><i></i></div>
<div class="a" style="left:127px;top:687px;width:45px;height:1px;background:#696969"></div>
<div class="a" style="left:141px;top:672px;width:31px;height:15px;background:#e3e3e3"></div>
<div class="a mono sr" style="left:141px;top:674px;width:27px;text-align:right;line-height:16px">12</div>
<div class="a" style="left:173px;top:671px;width:1570px;height:16px;background:#e6ffe6"></div>
<div class="a" style="left:173px;top:687px;width:1570px;height:1px;background:#c0c0c0"></div>
<div class="a mono sr" style="left:173px;top:674px;width:66px;text-align:right;line-height:16px">705588</div>
<div class="a mono sr" style="left:244px;top:674px;width:66px;text-align:right;line-height:16px">493</div>
<div class="a mono sr" style="left:315px;top:674px;width:66px;text-align:right;line-height:16px">2588</div>
<div class="a mono sr" style="left:386px;top:674px;width:66px;text-align:right;line-height:16px">245068</div>
<div class="a mono sr" style="left:457px;top:674px;width:66px;text-align:right;line-height:16px">2</div>
<div class="a mono sr" style="left:528px;top:674px;width:66px;text-align:right;line-height:16px">282</div>
<div class="a mono" style="left:602px;top:674px;line-height:16px"><span class="cj">药品</span></div>
<div class="a mono" style="left:673px;top:674px;line-height:16px"><span class="cj">长嘱</span></div>
<div class="a mono sr" style="left:741px;top:674px;width:66px;text-align:right;line-height:16px">0</div>
<div class="a mono sr" style="left:812px;top:674px;width:66px;text-align:right;line-height:16px">10284</div>
<div class="a mono" style="left:886px;top:674px;line-height:16px"><span class="l" style="width:40px"><span>*0.9%</span></span><span class="cj">氯化钠注射液</span><span class="l" style="width:8px"><span>(</span></span><span class="cj">天泉</span><span class="l" style="width:8px"><span>)</span></span></div>
<div class="a eb" style="left:1192px;top:673px"><i></i></div>
<div class="a mono sl" style="left:1209px;top:674px;line-height:16px">100ml</div>
<div class="a eb" style="left:1303px;top:673px"><i></i></div>
<div class="a" style="left:1317px;top:671px;width:70px;height:16px;background:#f3fbe5"></div>
<div class="a mono" style="left:1391px;top:674px;line-height:16px"><span class="cj">当日</span></div>
<div class="a mono sr" style="left:1459px;top:674px;width:66px;text-align:right;line-height:16px">100.00</div>
<div class="a mono sl" style="left:1533px;top:674px;line-height:16px">ml</div>
<div class="a mono sr" style="left:1601px;top:674px;width:66px;text-align:right;line-height:16px">1.00</div>
<div class="a mono" style="left:1675px;top:674px;line-height:16px"><span class="cj">瓶</span></div>
<div class="a eb" style="left:1729px;top:673px"><i></i></div>
<div class="a" style="left:127px;top:704px;width:45px;height:1px;background:#696969"></div>
<div class="a" style="left:141px;top:689px;width:31px;height:15px;background:#e3e3e3"></div>
<div class="a mono sr" style="left:141px;top:691px;width:27px;text-align:right;line-height:16px">13</div>
<div class="a" style="left:173px;top:688px;width:1570px;height:16px;background:#fff"></div>
<div class="a" style="left:173px;top:704px;width:1570px;height:1px;background:#c0c0c0"></div>
<div class="a mono sr" style="left:173px;top:691px;width:66px;text-align:right;line-height:16px">705588</div>
<div class="a mono sr" style="left:244px;top:691px;width:66px;text-align:right;line-height:16px">493</div>
<div class="a mono sr" style="left:315px;top:691px;width:66px;text-align:right;line-height:16px">2588</div>
<div class="a mono sr" style="left:386px;top:691px;width:66px;text-align:right;line-height:16px">245069</div>
<div class="a mono sr" style="left:457px;top:691px;width:66px;text-align:right;line-height:16px">2</div>
<div class="a mono sr" style="left:528px;top:691px;width:66px;text-align:right;line-height:16px">282</div>
<div class="a mono" style="left:602px;top:691px;line-height:16px"><span class="cj">药品</span></div>
<div class="a mono" style="left:673px;top:691px;line-height:16px"><span class="cj">长嘱</span></div>
<div class="a mono sr" style="left:741px;top:691px;width:66px;text-align:right;line-height:16px">0</div>
<div class="a mono sr" style="left:812px;top:691px;width:66px;text-align:right;line-height:16px">10647</div>
<div class="a mono" style="left:886px;top:691px;line-height:16px"><span class="cj">蔗糖铁注射液</span></div>
<div class="a eb" style="left:1192px;top:690px"><i></i></div>
<div class="a mono sl" style="left:1209px;top:691px;line-height:16px">5ml:100mg</div>
<div class="a eb" style="left:1303px;top:690px"><i></i></div>
<div class="a" style="left:1317px;top:688px;width:70px;height:16px;background:#ffffe8"></div>
<div class="a mono" style="left:1391px;top:691px;line-height:16px"><span class="cj">当日</span></div>
<div class="a mono sr" style="left:1459px;top:691px;width:66px;text-align:right;line-height:16px">10.00</div>
<div class="a mono sl" style="left:1533px;top:691px;line-height:16px">ml</div>
<div class="a mono sr" style="left:1601px;top:691px;width:66px;text-align:right;line-height:16px">2.00</div>
<div class="a mono" style="left:1675px;top:691px;line-height:16px"><span class="cj">支</span></div>
<div class="a eb" style="left:1729px;top:690px"><i></i></div>
<div class="a" style="left:127px;top:721px;width:45px;height:1px;background:#696969"></div>
<div class="a" style="left:141px;top:706px;width:31px;height:15px;background:#e3e3e3"></div>
<div class="a mono sr" style="left:141px;top:708px;width:27px;text-align:right;line-height:16px">14</div>
<div class="a" style="left:173px;top:705px;width:1570px;height:16px;background:#e6ffe6"></div>
<div class="a" style="left:173px;top:721px;width:1570px;height:1px;background:#c0c0c0"></div>
<div class="a mono sr" style="left:173px;top:708px;width:66px;text-align:right;line-height:16px">705588</div>
<div class="a mono sr" style="left:244px;top:708px;width:66px;text-align:right;line-height:16px">493</div>
<div class="a mono sr" style="left:315px;top:708px;width:66px;text-align:right;line-height:16px">2588</div>
<div class="a mono sr" style="left:386px;top:708px;width:66px;text-align:right;line-height:16px">244980</div>
<div class="a mono sr" style="left:457px;top:708px;width:66px;text-align:right;line-height:16px">2</div>
<div class="a mono sr" style="left:528px;top:708px;width:66px;text-align:right;line-height:16px">282</div>
<div class="a mono" style="left:602px;top:708px;line-height:16px"><span class="cj">药品</span></div>
<div class="a mono" style="left:673px;top:708px;line-height:16px"><span class="cj">长嘱</span></div>
<div class="a mono sr" style="left:741px;top:708px;width:66px;text-align:right;line-height:16px">0</div>
<div class="a mono sr" style="left:812px;top:708px;width:66px;text-align:right;line-height:16px">10284</div>
<div class="a mono" style="left:886px;top:708px;line-height:16px"><span class="l" style="width:40px"><span>*0.9%</span></span><span class="cj">氯化钠注射液</span><span class="l" style="width:8px"><span>(</span></span><span class="cj">天泉</span><span class="l" style="width:8px"><span>)</span></span></div>
<div class="a eb" style="left:1192px;top:707px"><i></i></div>
<div class="a mono sl" style="left:1209px;top:708px;line-height:16px">100ml</div>
<div class="a eb" style="left:1303px;top:707px"><i></i></div>
<div class="a" style="left:1317px;top:705px;width:70px;height:16px;background:#f3fbe5"></div>
<div class="a mono" style="left:1391px;top:708px;line-height:16px"><span class="cj">当日</span></div>
<div class="a mono sr" style="left:1459px;top:708px;width:66px;text-align:right;line-height:16px">100.00</div>
<div class="a mono sl" style="left:1533px;top:708px;line-height:16px">ml</div>
<div class="a mono sr" style="left:1601px;top:708px;width:66px;text-align:right;line-height:16px">1.00</div>
<div class="a mono" style="left:1675px;top:708px;line-height:16px"><span class="cj">瓶</span></div>
<div class="a eb" style="left:1729px;top:707px"><i></i></div>
<div class="a" style="left:127px;top:738px;width:45px;height:1px;background:#696969"></div>
<div class="a" style="left:141px;top:723px;width:31px;height:15px;background:#e3e3e3"></div>
<div class="a mono sr" style="left:141px;top:725px;width:27px;text-align:right;line-height:16px">15</div>
<div class="a" style="left:173px;top:722px;width:1570px;height:16px;background:#fff"></div>
<div class="a" style="left:173px;top:738px;width:1570px;height:1px;background:#c0c0c0"></div>
<div class="a mono sr" style="left:173px;top:725px;width:66px;text-align:right;line-height:16px">705588</div>
<div class="a mono sr" style="left:244px;top:725px;width:66px;text-align:right;line-height:16px">493</div>
<div class="a mono sr" style="left:315px;top:725px;width:66px;text-align:right;line-height:16px">2588</div>
<div class="a mono sr" style="left:386px;top:725px;width:66px;text-align:right;line-height:16px">245001</div>
<div class="a mono sr" style="left:457px;top:725px;width:66px;text-align:right;line-height:16px">2</div>
<div class="a mono sr" style="left:528px;top:725px;width:66px;text-align:right;line-height:16px">282</div>
<div class="a mono" style="left:602px;top:725px;line-height:16px"><span class="cj">药品</span></div>
<div class="a mono" style="left:673px;top:725px;line-height:16px"><span class="cj">长嘱</span></div>
<div class="a mono sr" style="left:741px;top:725px;width:66px;text-align:right;line-height:16px">0</div>
<div class="a mono sr" style="left:812px;top:725px;width:66px;text-align:right;line-height:16px">9170</div>
<div class="a mono" style="left:886px;top:725px;line-height:16px"><span class="l" style="width:8px"><span>*</span></span><span class="cj">氯化钠注射液</span></div>
<div class="a eb" style="left:1192px;top:724px"><i></i></div>
<div class="a mono sl" style="left:1209px;top:725px;line-height:16px">10ml:90mg*5</div>
<div class="a eb" style="left:1303px;top:724px"><i></i></div>
<div class="a" style="left:1317px;top:722px;width:70px;height:16px;background:#ffffe8"></div>
<div class="a mono" style="left:1391px;top:725px;line-height:16px"><span class="cj">当日</span></div>
<div class="a mono sr" style="left:1459px;top:725px;width:66px;text-align:right;line-height:16px">2.00</div>
<div class="a mono sl" style="left:1533px;top:725px;line-height:16px">ml</div>
<div class="a mono sr" style="left:1601px;top:725px;width:66px;text-align:right;line-height:16px">2.00</div>
<div class="a mono" style="left:1675px;top:725px;line-height:16px"><span class="cj">支</span></div>
<div class="a eb" style="left:1729px;top:724px"><i></i></div>
<div class="a" style="left:127px;top:755px;width:45px;height:1px;background:#696969"></div>
<div class="a" style="left:141px;top:740px;width:31px;height:15px;background:#e3e3e3"></div>
<div class="a mono sr" style="left:141px;top:742px;width:27px;text-align:right;line-height:16px">16</div>
<div class="a" style="left:173px;top:739px;width:1570px;height:16px;background:#e6ffe6"></div>
<div class="a" style="left:173px;top:755px;width:1570px;height:1px;background:#c0c0c0"></div>
<div class="a mono sr" style="left:173px;top:742px;width:66px;text-align:right;line-height:16px">705588</div>
<div class="a mono sr" style="left:244px;top:742px;width:66px;text-align:right;line-height:16px">493</div>
<div class="a mono sr" style="left:315px;top:742px;width:66px;text-align:right;line-height:16px">2588</div>
<div class="a mono sr" style="left:386px;top:742px;width:66px;text-align:right;line-height:16px">245169</div>
<div class="a mono sr" style="left:457px;top:742px;width:66px;text-align:right;line-height:16px">2</div>
<div class="a mono sr" style="left:528px;top:742px;width:66px;text-align:right;line-height:16px">282</div>
<div class="a mono" style="left:602px;top:742px;line-height:16px"><span class="cj">药品</span></div>
<div class="a mono" style="left:673px;top:742px;line-height:16px"><span class="cj">长嘱</span></div>
<div class="a mono sr" style="left:741px;top:742px;width:66px;text-align:right;line-height:16px">0</div>
<div class="a mono sr" style="left:812px;top:742px;width:66px;text-align:right;line-height:16px">10334</div>
<div class="a mono" style="left:886px;top:742px;line-height:16px"><span class="l" style="width:8px"><span>*</span></span><span class="cj">吸入用布地奈德混悬液</span></div>
<div class="a eb" style="left:1192px;top:741px"><i></i></div>
<div class="a mono" style="left:1209px;top:742px;line-height:16px"><span class="l" style="width:40px"><span>2ml*5</span></span><span class="cj">支</span></div>
<div class="a eb" style="left:1303px;top:741px"><i></i></div>
<div class="a" style="left:1317px;top:739px;width:70px;height:16px;background:#f3fbe5"></div>
<div class="a mono" style="left:1391px;top:742px;line-height:16px"><span class="cj">当日</span></div>
<div class="a mono sr" style="left:1459px;top:742px;width:66px;text-align:right;line-height:16px">4.00</div>
<div class="a mono sl" style="left:1533px;top:742px;line-height:16px">ml</div>
<div class="a mono sr" style="left:1601px;top:742px;width:66px;text-align:right;line-height:16px">6.00</div>
<div class="a mono" style="left:1675px;top:742px;line-height:16px"><span class="cj">支</span></div>
<div class="a eb" style="left:1729px;top:741px"><i></i></div>
<div class="a" style="left:127px;top:772px;width:45px;height:1px;background:#696969"></div>
<div class="a" style="left:141px;top:757px;width:31px;height:15px;background:#e3e3e3"></div>
<div class="a mono sr" style="left:141px;top:759px;width:27px;text-align:right;line-height:16px">17</div>
<div class="a" style="left:173px;top:756px;width:1570px;height:16px;background:#fff"></div>
<div class="a" style="left:173px;top:772px;width:1570px;height:1px;background:#c0c0c0"></div>
<div class="a mono sr" style="left:173px;top:759px;width:66px;text-align:right;line-height:16px">705588</div>
<div class="a mono sr" style="left:244px;top:759px;width:66px;text-align:right;line-height:16px">493</div>
<div class="a mono sr" style="left:315px;top:759px;width:66px;text-align:right;line-height:16px">2588</div>
<div class="a mono sr" style="left:386px;top:759px;width:66px;text-align:right;line-height:16px">245170</div>
<div class="a mono sr" style="left:457px;top:759px;width:66px;text-align:right;line-height:16px">2</div>
<div class="a mono sr" style="left:528px;top:759px;width:66px;text-align:right;line-height:16px">282</div>
<div class="a mono" style="left:602px;top:759px;line-height:16px"><span class="cj">药品</span></div>
<div class="a mono" style="left:673px;top:759px;line-height:16px"><span class="cj">长嘱</span></div>
<div class="a mono sr" style="left:741px;top:759px;width:66px;text-align:right;line-height:16px">0</div>
<div class="a mono sr" style="left:812px;top:759px;width:66px;text-align:right;line-height:16px">9272</div>
<div class="a mono" style="left:886px;top:759px;line-height:16px"><span class="l" style="width:8px"><span>*</span></span><span class="cj">多潘立酮片</span></div>
<div class="a eb" style="left:1192px;top:758px"><i></i></div>
<div class="a mono sl" style="left:1209px;top:759px;line-height:16px">10mg*30</div>
<div class="a eb" style="left:1303px;top:758px"><i></i></div>
<div class="a" style="left:1317px;top:756px;width:70px;height:16px;background:#ffffe8"></div>
<div class="a mono" style="left:1391px;top:759px;line-height:16px"><span class="cj">当日</span></div>
<div class="a mono sr" style="left:1459px;top:759px;width:66px;text-align:right;line-height:16px">10.00</div>
<div class="a mono sl" style="left:1533px;top:759px;line-height:16px">mg</div>
<div class="a mono sr" style="left:1601px;top:759px;width:66px;text-align:right;line-height:16px">3.00</div>
<div class="a mono" style="left:1675px;top:759px;line-height:16px"><span class="cj">片</span></div>
<div class="a eb" style="left:1729px;top:758px"><i></i></div>
<div class="a" style="left:127px;top:789px;width:45px;height:1px;background:#696969"></div>
<div class="a" style="left:141px;top:774px;width:31px;height:15px;background:#e3e3e3"></div>
<div class="a mono sr" style="left:141px;top:776px;width:27px;text-align:right;line-height:16px">18</div>
<div class="a" style="left:173px;top:773px;width:1570px;height:16px;background:#e6ffe6"></div>
<div class="a" style="left:173px;top:789px;width:1570px;height:1px;background:#c0c0c0"></div>
<div class="a mono sr" style="left:173px;top:776px;width:66px;text-align:right;line-height:16px">705588</div>
<div class="a mono sr" style="left:244px;top:776px;width:66px;text-align:right;line-height:16px">493</div>
<div class="a mono sr" style="left:315px;top:776px;width:66px;text-align:right;line-height:16px">2588</div>
<div class="a mono sr" style="left:386px;top:776px;width:66px;text-align:right;line-height:16px">245194</div>
<div class="a mono sr" style="left:457px;top:776px;width:66px;text-align:right;line-height:16px">2</div>
<div class="a mono sr" style="left:528px;top:776px;width:66px;text-align:right;line-height:16px">282</div>
<div class="a mono" style="left:602px;top:776px;line-height:16px"><span class="cj">非药品</span></div>
<div class="a mono" style="left:673px;top:776px;line-height:16px"><span class="cj">长嘱</span></div>
<div class="a mono sr" style="left:741px;top:776px;width:66px;text-align:right;line-height:16px">2483</div>
<div class="a mono sr" style="left:812px;top:776px;width:66px;text-align:right;line-height:16px">0</div>
<div class="a mono" style="left:886px;top:776px;line-height:16px"><span class="cj">导尿</span><span class="l" style="width:8px"><span>[</span></span><span class="cj">留置导尿次日起每日收</span><span class="l" style="width:8px"><span>2</span></span><span class="cj">元</span><span class="l" style="width:8px"><span>]</span></span></div>
<div class="a eb" style="left:1192px;top:775px"><i></i></div>
<div class="a" style="left:1206px;top:773px;width:110px;height:16px;background:#f3fbe5"></div>
<div class="a eb" style="left:1303px;top:775px"><i></i></div>
<div class="a" style="left:1317px;top:773px;width:70px;height:16px;background:#f3fbe5"></div>
<div class="a mono" style="left:1391px;top:776px;line-height:16px"><span class="cj">当日</span></div>
<div class="a mono sr" style="left:1459px;top:776px;width:66px;text-align:right;line-height:16px">1.00</div>
<div class="a mono" style="left:1533px;top:776px;line-height:16px"><span class="cj">日</span></div>
<div class="a" style="left:1601px;top:773px;width:70px;height:16px;background:#f3fbe5"></div>
<div class="a mono" style="left:1675px;top:776px;line-height:16px"><span class="cj">日</span></div>
<div class="a eb" style="left:1729px;top:775px"><i></i></div>
<div class="a" style="left:127px;top:806px;width:45px;height:1px;background:#696969"></div>
<div class="a" style="left:141px;top:791px;width:31px;height:15px;background:#e3e3e3"></div>
<div class="a mono sr" style="left:141px;top:793px;width:27px;text-align:right;line-height:16px">19</div>
<div class="a" style="left:173px;top:790px;width:1570px;height:16px;background:#fff"></div>
<div class="a" style="left:173px;top:806px;width:1570px;height:1px;background:#c0c0c0"></div>
<div class="a mono sr" style="left:173px;top:793px;width:66px;text-align:right;line-height:16px">705588</div>
<div class="a mono sr" style="left:244px;top:793px;width:66px;text-align:right;line-height:16px">493</div>
<div class="a mono sr" style="left:315px;top:793px;width:66px;text-align:right;line-height:16px">2588</div>
<div class="a mono sr" style="left:386px;top:793px;width:66px;text-align:right;line-height:16px">244979</div>
<div class="a mono sr" style="left:457px;top:793px;width:66px;text-align:right;line-height:16px">2</div>
<div class="a mono sr" style="left:528px;top:793px;width:66px;text-align:right;line-height:16px">282</div>
<div class="a mono" style="left:602px;top:793px;line-height:16px"><span class="cj">药品</span></div>
<div class="a mono" style="left:673px;top:793px;line-height:16px"><span class="cj">长嘱</span></div>
<div class="a mono sr" style="left:741px;top:793px;width:66px;text-align:right;line-height:16px">0</div>
<div class="a mono sr" style="left:812px;top:793px;width:66px;text-align:right;line-height:16px">9272</div>
<div class="a mono" style="left:886px;top:793px;line-height:16px"><span class="l" style="width:8px"><span>*</span></span><span class="cj">多潘立酮片</span></div>
<div class="a eb" style="left:1192px;top:792px"><i></i></div>
<div class="a mono sl" style="left:1209px;top:793px;line-height:16px">10mg*30</div>
<div class="a eb" style="left:1303px;top:792px"><i></i></div>
<div class="a" style="left:1317px;top:790px;width:70px;height:16px;background:#ffffe8"></div>
<div class="a mono" style="left:1391px;top:793px;line-height:16px"><span class="cj">当日</span></div>
<div class="a mono sr" style="left:1459px;top:793px;width:66px;text-align:right;line-height:16px">10.00</div>
<div class="a mono sl" style="left:1533px;top:793px;line-height:16px">mg</div>
<div class="a mono sr" style="left:1601px;top:793px;width:66px;text-align:right;line-height:16px">3.00</div>
<div class="a mono" style="left:1675px;top:793px;line-height:16px"><span class="cj">片</span></div>
<div class="a eb" style="left:1729px;top:792px"><i></i></div>
<div class="a" style="left:127px;top:823px;width:45px;height:1px;background:#696969"></div>
<div class="a" style="left:141px;top:808px;width:31px;height:15px;background:#e3e3e3"></div>
<div class="a mono sr" style="left:141px;top:810px;width:27px;text-align:right;line-height:16px">20</div>
<div class="a" style="left:173px;top:807px;width:1570px;height:16px;background:#e6ffe6"></div>
<div class="a" style="left:173px;top:823px;width:1570px;height:1px;background:#c0c0c0"></div>
<div class="a mono sr" style="left:173px;top:810px;width:66px;text-align:right;line-height:16px">705588</div>
<div class="a mono sr" style="left:244px;top:810px;width:66px;text-align:right;line-height:16px">493</div>
<div class="a mono sr" style="left:315px;top:810px;width:66px;text-align:right;line-height:16px">2588</div>
<div class="a mono sr" style="left:386px;top:810px;width:66px;text-align:right;line-height:16px">0</div>
<div class="a mono sr" style="left:457px;top:810px;width:66px;text-align:right;line-height:16px">493</div>
<div class="a mono sr" style="left:528px;top:810px;width:66px;text-align:right;line-height:16px">282</div>
<div class="a mono" style="left:602px;top:810px;line-height:16px"><span class="cj">药品</span></div>
<div class="a mono" style="left:673px;top:810px;line-height:16px"><span class="cj">临嘱</span></div>
<div class="a mono sr" style="left:741px;top:810px;width:66px;text-align:right;line-height:16px">0</div>
<div class="a mono sr" style="left:812px;top:810px;width:66px;text-align:right;line-height:16px">11208</div>
<div class="a mono" style="left:886px;top:810px;line-height:16px"><span class="cj">注射用阿奇霉素</span></div>
<div class="a eb" style="left:1192px;top:809px"><i></i></div>
<div class="a mono sl" style="left:1209px;top:810px;line-height:16px">0.125g</div>
<div class="a eb" style="left:1303px;top:809px"><i></i></div>
<div class="a" style="left:1317px;top:807px;width:70px;height:16px;background:#f3fbe5"></div>
<div class="a" style="left:1388px;top:807px;width:70px;height:16px;background:#f3fbe5"></div>
<div class="a mono sr" style="left:1459px;top:810px;width:66px;text-align:right;line-height:16px">0.50</div>
<div class="a mono sl" style="left:1533px;top:810px;line-height:16px">g</div>
<div class="a mono sr" style="left:1601px;top:810px;width:66px;text-align:right;line-height:16px">4.00</div>
<div class="a mono" style="left:1675px;top:810px;line-height:16px"><span class="cj">支</span></div>
<div class="a eb" style="left:1729px;top:809px"><i></i></div>
<div class="a" style="left:243px;top:552px;width:1px;height:272px;background:#c0c0c0"></div>
<div class="a" style="left:314px;top:552px;width:1px;height:272px;background:#c0c0c0"></div>
<div class="a" style="left:385px;top:552px;width:1px;height:272px;background:#c0c0c0"></div>
<div class="a" style="left:456px;top:552px;width:1px;height:272px;background:#c0c0c0"></div>
<div class="a" style="left:527px;top:552px;width:1px;height:272px;background:#c0c0c0"></div>
<div class="a" style="left:598px;top:552px;width:1px;height:272px;background:#c0c0c0"></div>
<div class="a" style="left:669px;top:552px;width:1px;height:272px;background:#c0c0c0"></div>
<div class="a" style="left:740px;top:552px;width:1px;height:272px;background:#c0c0c0"></div>
<div class="a" style="left:811px;top:552px;width:1px;height:272px;background:#c0c0c0"></div>
<div class="a" style="left:882px;top:552px;width:1px;height:272px;background:#c0c0c0"></div>
<div class="a" style="left:1205px;top:552px;width:1px;height:272px;background:#c0c0c0"></div>
<div class="a" style="left:1316px;top:552px;width:1px;height:272px;background:#c0c0c0"></div>
<div class="a" style="left:1387px;top:552px;width:1px;height:272px;background:#c0c0c0"></div>
<div class="a" style="left:1458px;top:552px;width:1px;height:272px;background:#c0c0c0"></div>
<div class="a" style="left:1529px;top:552px;width:1px;height:272px;background:#c0c0c0"></div>
<div class="a" style="left:1600px;top:552px;width:1px;height:272px;background:#c0c0c0"></div>
<div class="a" style="left:1671px;top:552px;width:1px;height:272px;background:#c0c0c0"></div>
<div class="a" style="left:1742px;top:552px;width:1px;height:272px;background:#c0c0c0"></div>
<svg class="a" style="left:131px;top:741px" width="8" height="12"><polygon points="0.5,0.5 7,6 0.5,11.5" fill="#000"/></svg>
<div class="a" style="left:1743px;top:535px;width:21px;height:289px;background:linear-gradient(90deg,#e8e8e8,#f1f1f1 40%,#f3f3f3)"></div>
<svg class="a" style="left:1743px;top:535px" width="21" height="289"><polygon points="5.5,13 10.5,8 15.5,13" fill="url(#ag)"/><polygon points="5.5,277 15.5,277 10.5,282" fill="url(#ag)"/></svg>
<div class="a" style="left:1744px;top:607px;width:19px;height:197px;border:1px solid #979797;border-radius:2px;background:linear-gradient(90deg,#f3f3f3,#e2e2e2 45%,#cfcfcf 50%,#d9d9d9)"></div>
<div class="a" style="left:1749px;top:700px;width:9px;height:2px;background:#555;border-bottom:1px solid #fff"></div>
<div class="a" style="left:1749px;top:704px;width:9px;height:2px;background:#555;border-bottom:1px solid #fff"></div>
<div class="a" style="left:1749px;top:708px;width:9px;height:2px;background:#555;border-bottom:1px solid #fff"></div>
<div class="a" style="left:127px;top:826px;width:1616px;height:21px;background:linear-gradient(#e8e8e8,#f1f1f1 40%,#f3f3f3)"></div>
<svg class="a" style="left:127px;top:826px" width="1616" height="21"><defs><linearGradient id="ah" x1="0" y1="0" x2="1" y2="0"><stop offset="0" stop-color="#777"/><stop offset="1" stop-color="#222"/></linearGradient></defs><polygon points="12,5.5 12,15.5 7,10.5" fill="url(#ah)"/><polygon points="1603,5.5 1603,15.5 1608,10.5" fill="url(#ah)"/></svg>
<div class="a" style="left:149px;top:827px;width:273px;height:19px;border:1px solid #979797;border-radius:2px;background:linear-gradient(#f3f3f3,#e2e2e2 45%,#cfcfcf 50%,#d9d9d9)"></div>
<div class="a" style="left:280px;top:832px;width:2px;height:9px;background:#555;border-right:1px solid #fff"></div>
<div class="a" style="left:284px;top:832px;width:2px;height:9px;background:#555;border-right:1px solid #fff"></div>
<div class="a" style="left:288px;top:832px;width:2px;height:9px;background:#555;border-right:1px solid #fff"></div>
<div class="a" style="left:117px;top:857px;width:1653px;height:1px;background:#a0a0a0"></div>
<div class="a" style="left:1732px;top:485px;width:37px;height:1px;background:#a3a7b0"></div>
<div class="a" style="left:118px;top:880px;width:1652px;height:2px;background:#fafafa"></div>
<div class="a" style="left:118px;top:858px;width:1652px;height:22px;background:#f0eceb"></div>
<div class="a" style="left:118px;top:858px;width:26px;height:21px;background:#fff"></div>
<div class="a" style="left:120px;top:860px;width:23px;height:7px;background:#0000ff"></div>
<div class="a" style="left:120px;top:871px;width:23px;height:7px;background:#000"></div>
<svg class="a" style="left:148px;top:861px" width="16" height="18" viewBox="148 861 16 18"><path d="M152.8,866.6A4,4 0 1 0 159.9,868.2" fill="none" stroke="#000" stroke-width="1.9"/><path d="M151.2,864.8H155.6V869" fill="none" stroke="#000" stroke-width="1.7"/><polygon points="157,863.8 161.2,866.6 157,869" fill="#f80000"/></svg>
<div class="a" style="left:167px;top:859px;width:1px;height:20px;background:#d8d4d3"></div><div class="a" style="left:168px;top:859px;width:1px;height:20px;background:#fbfafa"></div>
<div class="a" style="left:217px;top:859px;width:1px;height:20px;background:#d8d4d3"></div><div class="a" style="left:218px;top:859px;width:1px;height:20px;background:#fbfafa"></div>
<div class="a" style="left:287px;top:859px;width:1px;height:20px;background:#d8d4d3"></div><div class="a" style="left:288px;top:859px;width:1px;height:20px;background:#fbfafa"></div>
<div class="a mono sl" style="left:172px;top:863px;line-height:16px">47:28</div>
<div class="a mono" style="left:292px;top:863px;line-height:16px"><span class="l" style="width:24px"><span>20 </span></span><span class="cj">行被选择，耗时</span><span class="l" style="width:48px"><span> 0.25 </span></span><span class="cj">秒</span></div>
<div class="hl" style="top:882px;background:#a0a0a0"></div><div class="hl" style="top:883px;background:#fdfdfd"></div>
<div class="hl" style="top:898px;background:#a0a0a0"></div><div class="hl" style="top:899px;background:#fdfdfd"></div>
<svg class="a" style="left:1740px;top:884px" width="30" height="14"><rect x="6" y="2.6" width="4" height="5.6" fill="#f0f0f0" stroke="#000" stroke-width="1.1"/><rect x="8.5" y="2.3" width="2" height="6" fill="#000"/><path d="M4.5,8.6h7.2" stroke="#000" stroke-width="1.3"/><path d="M8,9v2.4" stroke="#000" stroke-width="1.2"/><path d="M19.3,3.2l6.6,6.6M25.9,3.2l-6.6,6.6" stroke="#000" stroke-width="1" fill="none"/></svg>
<div class="a" style="left:-2px;top:905px;width:190px;height:20px;background:#fff;border:1px solid #c9ccd4;border-radius:2px"></div>
<svg class="a" style="left:172px;top:912px" width="10" height="6"><polygon points="0.5,0.5 9.5,0.5 5,5.5" fill="#000"/></svg>
<svg class="a" style="left:0;top:0" width="1770" height="920" viewBox="0 0 1770 920"><polygon points="0.5,34 8.5,34 4.5,38.2" fill="#000"/><rect x="21" y="28" width="14" height="14" rx="1" fill="#000"/><rect x="22.2" y="29.2" width="11.6" height="11.6" fill="#c6c61e"/><rect x="24" y="28.8" width="8.6" height="6" fill="#dcd3d3"/><rect x="24" y="36.4" width="8.6" height="5" fill="#000"/><rect x="29.8" y="38" width="2" height="2.8" fill="#e0d8d8"/><rect x="33" y="29.2" width="1" height="1" fill="#eee"/><rect x="47.0" y="21" width="1.3" height="28" fill="#9a9a9a"/><rect x="119.0" y="21" width="1.3" height="28" fill="#9a9a9a"/><rect x="191.0" y="21" width="1.3" height="28" fill="#9a9a9a"/><rect x="295.0" y="21" width="1.3" height="28" fill="#9a9a9a"/><rect x="367.0" y="21" width="1.3" height="28" fill="#9a9a9a"/><rect x="467.0" y="21" width="1.3" height="28" fill="#9a9a9a"/><rect x="635.0" y="21" width="1.3" height="28" fill="#9a9a9a"/><rect x="739.0" y="21" width="1.3" height="28" fill="#9a9a9a"/><path d="M63.2,35.5V27.2H68.5L72.6,31.3V35.5Z" fill="#fff" stroke="#000" stroke-width="1.3"/><path d="M68.3,27.5V31.1H72" fill="none" stroke="#000" stroke-width="1"/><path d="M65,29.4h2M65,31.4h2.5M65,33.3h3.6M70,33.3h1" stroke="#000" stroke-width="1.1"/><path d="M60.6,35.6H75.4V41.6H74.4V42.6H61.6V41.6H60.6Z" fill="#fff" stroke="#000" stroke-width="1.3"/><rect x="61" y="39" width="14" height="1.2" fill="#000"/><rect x="61.6" y="40.2" width="12.8" height="1.6" fill="#c8c8c8"/><path d="M62,37.6h10" stroke="#bbb" stroke-width="1.4" stroke-dasharray="1 .8"/><rect x="72.6" y="36.9" width="1.4" height="1.4" fill="#f00"/><path d="M93.6,35.5V29.2H102.5L106.6,33.3V35.5Z" fill="#fff" stroke="#000" stroke-width="1.3"/><path d="M102.3,29.5V33H106" fill="none" stroke="#000" stroke-width="1"/><path d="M95.4,31.2h1.2M97.6,31.2h3.4M95.4,33.2h3M99.4,33.2h2" stroke="#000" stroke-width="1.1"/><path d="M92.6,35.6H107.4V41.6H106.4V42.6H93.6V41.6H92.6Z" fill="#fff" stroke="#000" stroke-width="1.3"/><rect x="93" y="39" width="14" height="1.2" fill="#000"/><rect x="93.6" y="40.2" width="12.8" height="1.6" fill="#c8c8c8"/><path d="M94,37.6h10" stroke="#bbb" stroke-width="1.4" stroke-dasharray="1 .8"/><rect x="104.6" y="36.9" width="1.4" height="1.4" fill="#f00"/><path d="M137.5,34.3C140,30.8 145.6,31.2 145.6,35.2C145.6,36.6 144.8,37.6 143.6,38" fill="none" stroke="#00008a" stroke-width="1.5"/><polygon points="134,32.2 139.6,37.6 134,37.6" fill="#00008a"/><path d="M174.9,34.3C172.4,30.8 166.8,31.2 166.8,35.2C166.8,36.6 167.6,37.6 168.8,38" fill="none" stroke="#c6c6e2" stroke-width="1.5"/><polygon points="178.4,32.2 172.8,37.6 178.4,37.6" fill="#c6c6e2"/><path d="M209.2,28L209.2,31L213.2,38M213.79999999999998,28L213.79999999999998,31L209.79999999999998,38" fill="none" stroke="#000" stroke-width="1.3"/><ellipse cx="208.79999999999998" cy="39.2" rx="1.8" ry="2.6" fill="none" stroke="#00008a" stroke-width="1.3"/><ellipse cx="214.2" cy="38.6" rx="1.8" ry="2.6" fill="none" stroke="#00008a" stroke-width="1.3"/><path d="M236.6,29.200000000000003H241.2L243.6,31.6V38.2H236.6Z" fill="#fff" stroke="#000" stroke-width="1.3"/><path d="M241.2,29.200000000000003V31.6H243.6" fill="none" stroke="#000" stroke-width="1.04"/><path d="M238,32.4h2.5" stroke="#000" stroke-width="1.1"/><path d="M238,34.4h4" stroke="#000" stroke-width="1.1"/><path d="M238,36.2h4" stroke="#000" stroke-width="1.1"/><path d="M242.8,32.4H248.20000000000002L250.8,35.0V41.8H242.8Z" fill="#fff" stroke="#00008a" stroke-width="1.3"/><path d="M248.20000000000002,32.4V35.0H250.8" fill="none" stroke="#00008a" stroke-width="1.04"/><path d="M244.4,35.6h3" stroke="#000" stroke-width="1.1"/><path d="M244.4,37.6h5" stroke="#000" stroke-width="1.1"/><path d="M244.4,39.6h5" stroke="#000" stroke-width="1.1"/><rect x="268.6" y="29.599999999999998" width="13" height="11.4" rx="1" fill="#8a8440" stroke="#000" stroke-width="1.3"/><path d="M271.4,31.799999999999997V30.4H273.4L275.1,28.2L276.8,30.4H278.8V31.799999999999997Z" fill="#f4f060" stroke="#000" stroke-width="1"/><path d="M274.8,34.8H281.6L283.8,37.0V41.599999999999994H274.8Z" fill="#fff" stroke="#00008a" stroke-width="1.3"/><path d="M281.6,34.8V37.0H283.8" fill="none" stroke="#00008a" stroke-width="1.04"/><path d="M276.4,37.8h3.5" stroke="#00008a" stroke-width="1.1"/><path d="M276.4,39.599999999999994h5.5" stroke="#00008a" stroke-width="1.1"/><path d="M311.0,28.0H314.4V40.6H308.4V35.0L311.0,30.6Z" fill="#000"/><path d="M321.6,28.0H318.2V40.6H324.2V35.0L321.6,30.6Z" fill="#000"/><rect x="314.0" y="31.6" width="4.6" height="4.4" fill="#000"/><rect x="310.2" y="33.2" width="1.1" height="2.8" fill="#fff"/><rect x="309.8" y="37.6" width="1.2" height="1.6" fill="#fff"/><rect x="319.8" y="33.2" width="1.1" height="2.8" fill="#fff"/><rect x="319.4" y="37.6" width="1.2" height="1.6" fill="#fff"/><rect x="312.1" y="28.9" width="1.1" height="1.2" fill="#fff"/><rect x="319.5" y="28.9" width="1.1" height="1.2" fill="#fff"/><path d="M341.56,27.0H343.6V34.56H340.0V31.2L341.56,28.56Z" fill="#000"/><path d="M347.92,27.0H345.88V34.56H349.48V31.2L347.92,28.56Z" fill="#000"/><rect x="343.36" y="29.16" width="2.76" height="2.64" fill="#000"/><rect x="341.08" y="30.12" width="0.66" height="1.68" fill="#fff"/><rect x="340.84" y="32.76" width="0.72" height="0.96" fill="#fff"/><rect x="346.84" y="30.12" width="0.66" height="1.68" fill="#fff"/><rect x="346.6" y="32.76" width="0.72" height="0.96" fill="#fff"/><rect x="342.22" y="27.54" width="0.66" height="0.72" fill="#fff"/><rect x="346.66" y="27.54" width="0.66" height="0.72" fill="#fff"/><path d="M344,39.5h8" stroke="#00008a" stroke-width="1.3" stroke-dasharray="1.2 1"/><path d="M350.5,39.5h5" stroke="#00008a" stroke-width="1.4"/><polygon points="352.6,36.6 356.4,39.5 352.6,42.4" fill="#00008a"/><path d="M382.4,27.6H390.79999999999995L393.79999999999995,30.6V42.2H382.4Z" fill="#fff" stroke="#000" stroke-width="1.3"/><path d="M390.79999999999995,27.6V30.6H393.79999999999995" fill="none" stroke="#000" stroke-width="1.04"/><path d="M386.5,30h4" stroke="#666" stroke-width="1"/><path d="M386.5,32h5" stroke="#666" stroke-width="1"/><path d="M386.5,38h6" stroke="#666" stroke-width="1"/><path d="M386.5,40h6" stroke="#666" stroke-width="1"/><polygon points="379,35 384.6,29.8 384.6,33 391,33 391,37 384.6,37 384.6,40.2" fill="#14a014" stroke="#0a7a0a" stroke-width="0.6"/><polygon points="406.5,34 414.5,34 410.5,38" fill="#000"/><path d="M428.6,27.6H437.0L440.0,30.6V42.2H428.6Z" fill="#f4f4f4" stroke="#d4d4d4" stroke-width="1.3"/><path d="M437.0,27.6V30.6H440.0" fill="none" stroke="#d4d4d4" stroke-width="1.04"/><path d="M430.5,30h5" stroke="#d8d8d8" stroke-width="1"/><path d="M430.5,32h5" stroke="#d8d8d8" stroke-width="1"/><path d="M430.5,38h6" stroke="#d8d8d8" stroke-width="1"/><path d="M430.5,40h6" stroke="#d8d8d8" stroke-width="1"/><polygon points="443.2,35 437.6,29.8 437.6,33 431.2,33 431.2,37 437.6,37 437.6,40.2" fill="#c4e6c4"/><polygon points="452.6,34 460.6,34 456.6,38" fill="#b4b4b4"/><path d="M480.20000000000005,27.6H488.6L491.6,30.6V42.400000000000006H480.20000000000005Z" fill="#fff" stroke="#000" stroke-width="1.3"/><path d="M488.6,27.6V30.6H491.6" fill="none" stroke="#000" stroke-width="1.04"/><path d="M482.20000000000005,30.2h4.6" stroke="#8a8a8a" stroke-width="1.4"/><path d="M482.20000000000005,33.4h0" stroke="#8a8a8a" stroke-width="1.4"/><path d="M482.20000000000005,34.6h0" stroke="#8a8a8a" stroke-width="1.4"/><path d="M482.20000000000005,37h0" stroke="#8a8a8a" stroke-width="1.4"/><path d="M482.20000000000005,40h4.6" stroke="#8a8a8a" stroke-width="1.4"/><rect x="484.0" y="32.6" width="5.2" height="2.6" fill="#9a9a9a"/><rect x="484.0" y="36.4" width="3.4" height="1.6" fill="#9a9a9a"/><path d="M489.0,37.6L491.6,40.6L495.6,35.4" fill="none" stroke="#0a8a0a" stroke-width="2.2"/><path d="M514,29.2h14" stroke="#000" stroke-width="1.1"/><path d="M514,37.2h14" stroke="#000" stroke-width="1.1"/><path d="M514,39.6h10" stroke="#000" stroke-width="1.1"/><rect x="519.6" y="31" width="8.4" height="2.2" fill="#000"/><rect x="519.6" y="34" width="5.6" height="2.2" fill="#000"/><path d="M519.6,27v15" stroke="#000" stroke-width="1" stroke-dasharray="1.6 1.2"/><path d="M512,33.6h3.4" stroke="#00008a" stroke-width="1.4"/><polygon points="514.6,31 517.6,33.6 514.6,36.2" fill="#00008a"/><path d="M546,29.2h14" stroke="#000" stroke-width="1.1"/><path d="M546,37.2h14" stroke="#000" stroke-width="1.1"/><path d="M546,39.6h10" stroke="#000" stroke-width="1.1"/><rect x="551.6" y="31" width="8.4" height="2.2" fill="#000"/><rect x="551.6" y="34" width="5.6" height="2.2" fill="#000"/><path d="M551.6,27v15" stroke="#000" stroke-width="1" stroke-dasharray="1.6 1.2"/><path d="M546.2,33.6h3.4" stroke="#00008a" stroke-width="1.4"/><polygon points="547,31 544,33.6 547,36.2" fill="#00008a"/><path d="M580.6,27.6H589.0L592.0,30.6V42.2H580.6Z" fill="#fff" stroke="#000" stroke-width="1.3"/><path d="M589.0,27.6V30.6H592.0" fill="none" stroke="#000" stroke-width="1.04"/><path d="M582.8,31h3.4" stroke="#777" stroke-width="1"/><path d="M582.8,38.4h7" stroke="#777" stroke-width="1"/><path d="M582.8,40.2h7" stroke="#777" stroke-width="1"/><rect x="581.2" y="33.6" width="10.2" height="3.4" fill="#f00000"/><polygon points="576.4,32.4 579.6,35.4 576.4,38.4" fill="#000"/><path d="M612.2,27.6H620.6L623.6,30.6V42.2H612.2Z" fill="#fff" stroke="#000" stroke-width="1.3"/><path d="M620.6,27.6V30.6H623.6" fill="none" stroke="#000" stroke-width="1.04"/><path d="M614.4,31h3.4" stroke="#777" stroke-width="1"/><path d="M614.4,38.4h7" stroke="#777" stroke-width="1"/><path d="M614.4,40.2h7" stroke="#777" stroke-width="1"/><rect x="612.8000000000001" y="33.6" width="10.2" height="3.4" fill="#f8c0c0"/><polygon points="611.2,32.4 608.0,35.4 611.2,38.4" fill="#000"/><path d="M648.5,28.799999999999997v-1.4h1.2" fill="none" stroke="#000" stroke-width="1.1"/><path d="M650,26.9L656.4,30.0" fill="none" stroke="#000" stroke-width="1.2" stroke-dasharray="1.3 0.9"/><rect x="651.5" y="28.7" width="9.3" height="8.2" rx="1.3" fill="#b4b4b4" stroke="#000" stroke-width="1.3"/><polygon points="653,29.4 659.2,29.4 656.1,32.8" fill="#fff" stroke="#000" stroke-width="0.9"/><path d="M653.2,34.9h1.8M656.8,34.9h1.8" stroke="#777" stroke-width="1"/><rect x="661.2" y="30.299999999999997" width="1.8" height="5" fill="#fff" stroke="#000" stroke-width="1"/><path d="M664.3,29.599999999999998v6.4" stroke="#000" stroke-width="1.2"/><circle cx="660" cy="41" r="3" fill="#000"/><path d="M680.5,28.799999999999997v-1.4h1.2" fill="none" stroke="#d0d0d0" stroke-width="1.1"/><path d="M682,26.9L688.4,30.0" fill="none" stroke="#d0d0d0" stroke-width="1.2" stroke-dasharray="1.3 0.9"/><rect x="683.5" y="28.7" width="9.3" height="8.2" rx="1.3" fill="#e6e6e6" stroke="#d0d0d0" stroke-width="1.3"/><polygon points="685,29.4 691.2,29.4 688.1,32.8" fill="#f4f4f4" stroke="#d0d0d0" stroke-width="0.9"/><path d="M685.2,34.9h1.8M688.8,34.9h1.8" stroke="#dcdcdc" stroke-width="1"/><rect x="693.2" y="30.299999999999997" width="1.8" height="5" fill="#f4f4f4" stroke="#d0d0d0" stroke-width="1"/><path d="M696.3,29.599999999999998v6.4" stroke="#d0d0d0" stroke-width="1.2"/><rect x="688" y="38" width="2" height="6" fill="#d0d0d0"/><polygon points="691.6,38 691.6,44 695,41" fill="#d0d0d0"/><path d="M712.5,28.799999999999997v-1.4h1.2" fill="none" stroke="#000" stroke-width="1.1"/><path d="M714,26.9L720.4,30.0" fill="none" stroke="#000" stroke-width="1.2" stroke-dasharray="1.3 0.9"/><rect x="715.5" y="28.7" width="9.3" height="8.2" rx="1.3" fill="#b4b4b4" stroke="#000" stroke-width="1.3"/><polygon points="717,29.4 723.2,29.4 720.1,32.8" fill="#fff" stroke="#000" stroke-width="0.9"/><path d="M717.2,34.9h1.8M720.8,34.9h1.8" stroke="#777" stroke-width="1"/><rect x="725.2" y="30.299999999999997" width="1.8" height="5" fill="#fff" stroke="#000" stroke-width="1"/><path d="M728.3,29.599999999999998v6.4" stroke="#000" stroke-width="1.2"/><rect x="717" y="39.4" width="2.2" height="1.8" fill="#000"/><rect x="721" y="39.4" width="2.2" height="1.8" fill="#000"/><rect x="725" y="39.4" width="2.2" height="1.8" fill="#000"/><rect x="751.6" y="27.6" width="11.2" height="8.6" fill="#fff" stroke="#000" stroke-width="1.3"/><rect x="752.2" y="28" width="10" height="1.4" fill="#00008a"/><rect x="754.6" y="30.6" width="11.2" height="8.6" fill="#fff" stroke="#000" stroke-width="1.3"/><rect x="755.2" y="31" width="10" height="1.4" fill="#00008a"/><rect x="757.6" y="33.6" width="11.2" height="8.6" fill="#fff" stroke="#000" stroke-width="1.3"/><rect x="758.2" y="34" width="10" height="1.4" fill="#00008a"/><path d="M759.6,37.4h4.2" stroke="#000" stroke-width="1.1"/><path d="M759.6,39.6h2" stroke="#000" stroke-width="1.1"/><rect x="765" y="37" width="1.6" height="1" fill="#000"/><rect x="763.6" y="39.2" width="2.8" height="1" fill="#000"/><rect x="783" y="27" width="17.2" height="15.6" fill="#000"/><rect x="784" y="28" width="7.4" height="6.6" fill="#fff"/><rect x="784" y="28" width="7.4" height="1" fill="#1a1a9a"/><path d="M785.2,30.8h1.3M787.4,30.8h2.6M785.2,32.8h2.4M788.8,32.8h1.2" stroke="#000" stroke-width="1"/><rect x="792.6" y="28" width="7.4" height="6.6" fill="#fff"/><rect x="792.6" y="28" width="7.4" height="1" fill="#1a1a9a"/><path d="M793.8000000000001,30.8h1.3M796.0,30.8h2.6M793.8000000000001,32.8h2.4M797.4,32.8h1.2" stroke="#000" stroke-width="1"/><rect x="784" y="35.8" width="7.4" height="6.6" fill="#fff"/><rect x="784" y="35.8" width="7.4" height="1" fill="#1a1a9a"/><path d="M785.2,38.599999999999994h1.3M787.4,38.599999999999994h2.6M785.2,40.599999999999994h2.4M788.8,40.599999999999994h1.2" stroke="#000" stroke-width="1"/><rect x="792.6" y="35.8" width="7.4" height="6.6" fill="#fff"/><rect x="792.6" y="35.8" width="7.4" height="1" fill="#1a1a9a"/><path d="M793.8000000000001,38.599999999999994h1.3M796.0,38.599999999999994h2.6M793.8000000000001,40.599999999999994h2.4M797.4,40.599999999999994h1.2" stroke="#000" stroke-width="1"/><rect x="57.0" y="57" width="1.3" height="28" fill="#9a9a9a"/><rect x="129.0" y="57" width="1.3" height="28" fill="#9a9a9a"/><rect x="265.0" y="57" width="1.3" height="28" fill="#9a9a9a"/><path d="M-3,66H4L5,64L8,63L10,64.6L13,65.6V67.4L15,68.6V73.4L13,74.6V76.4L10,77.4L8,79L5,78L4,76H-3Z" fill="#ffff9a" stroke="#000" stroke-width="1.3"/><path d="M9.4,67.4h4.6M10.4,71h4.4M9.4,74.6h4.6" stroke="#808000" stroke-width="1.8"/><path d="M9.4,66.2h4M10.4,69.6h4.4M10.4,72.6h4.4M9.4,76h4" stroke="#000" stroke-width="1"/><ellipse cx="4.2" cy="71" rx="2" ry="2.6" fill="#808000" stroke="#000" stroke-width="1"/><ellipse cx="4.2" cy="71" rx="0.8" ry="1.2" fill="#ffff9a"/><polygon points="43.4,63.8 35.2,68.2 38.6,69.6 31.6,76.2 32.6,77.2 42.4,72 39,70.6 45.2,65.2 44.8,63.8" fill="#f6b2b2" stroke="#d2d2d2" stroke-width="1"/><path d="M70.8,71.8V76.2L73.60000000000001,78.5H82.8L85.60000000000001,76.2V71.8Z" fill="#c6eaea" stroke="#c4c4c4" stroke-width="1.2"/><path d="M70.8,74L73.60000000000001,76.4H82.8L85.60000000000001,74" fill="none" stroke="#c4c4c4" stroke-width="1.02"/><path d="M73.60000000000001,69.6H82.8L85.60000000000001,71.8L82.8,74.3H73.60000000000001L70.8,71.8Z" fill="#c6f0f0" stroke="#c4c4c4" stroke-width="1.2"/><polygon points="75.8,63 80.60000000000001,63 80.60000000000001,67.4 83.2,67.4 78.2,72.4 73.2,67.4 75.8,67.4" fill="#b6f0b6" stroke="#c8c8c8" stroke-width="0.9"/><path d="M102.8,71.8V76.2L105.60000000000001,78.5H114.8L117.60000000000001,76.2V71.8Z" fill="#c6eaea" stroke="#c4c4c4" stroke-width="1.2"/><path d="M102.8,74L105.60000000000001,76.4H114.8L117.60000000000001,74" fill="none" stroke="#c4c4c4" stroke-width="1.02"/><path d="M105.60000000000001,69.6H114.8L117.60000000000001,71.8L114.8,74.3H105.60000000000001L102.8,71.8Z" fill="#c6f0f0" stroke="#c4c4c4" stroke-width="1.2"/><polygon points="107.8,72.4 112.60000000000001,72.4 112.60000000000001,68 115.2,68 110.2,63 105.2,68 107.8,68" fill="#f4b6b6" stroke="#c8c8c8" stroke-width="0.9"/><path d="M142.6,71.8V76.2L145.4,78.5H154.6L157.4,76.2V71.8Z" fill="#008a96" stroke="#000" stroke-width="1.2"/><path d="M142.6,74L145.4,76.4H154.6L157.4,74" fill="none" stroke="#000" stroke-width="1.02"/><path d="M145.4,69.6H154.6L157.4,71.8L154.6,74.3H145.4L142.6,71.8Z" fill="#00e4ee" stroke="#000" stroke-width="1.2"/><circle cx="154.6" cy="66" r="4.4" fill="#f4f020" stroke="#000" stroke-width="1.1"/><circle cx="154.6" cy="66" r="3.2" fill="none" stroke="#c8c800" stroke-width="1" stroke-dasharray="1 1"/><rect x="152.4" y="70.4" width="4.6" height="5.2" rx="1" fill="#fff" stroke="#000" stroke-width="1"/><path d="M152.6,72.2h4.2M152.6,74h4.2" stroke="#555" stroke-width="0.9"/><path d="M174.6,71.8V76.2L177.4,78.5H186.6L189.4,76.2V71.8Z" fill="#008a96" stroke="#000" stroke-width="1.2"/><path d="M174.6,74L177.4,76.4H186.6L189.4,74" fill="none" stroke="#000" stroke-width="1.02"/><path d="M177.4,69.6H186.6L189.4,71.8L186.6,74.3H177.4L174.6,71.8Z" fill="#00e4ee" stroke="#000" stroke-width="1.2"/><path d="M175.4,68v-3.4h2.2" fill="none" stroke="#000" stroke-width="1.2"/><polygon points="177,62.4 179.4,64.6 177,66.8" fill="#000"/><text x="180.2" y="68" font-family="Liberation Sans,sans-serif" font-weight="bold" font-size="7.6" fill="#000" textLength="11.4" lengthAdjust="spacingAndGlyphs">SQL</text><path d="M206.6,71.8V76.2L209.4,78.5H218.6L221.4,76.2V71.8Z" fill="#008a96" stroke="#000" stroke-width="1.2"/><path d="M206.6,74L209.4,76.4H218.6L221.4,74" fill="none" stroke="#000" stroke-width="1.02"/><path d="M209.4,69.6H218.6L221.4,71.8L218.6,74.3H209.4L206.6,71.8Z" fill="#00e4ee" stroke="#000" stroke-width="1.2"/><path d="M207.91,63.0H209.88V70.31H206.4V67.06L207.91,64.51Z" fill="#000"/><path d="M214.06,63.0H212.08V70.31H215.56V67.06L214.06,64.51Z" fill="#000"/><rect x="209.65" y="65.09" width="2.67" height="2.55" fill="#000"/><rect x="207.44" y="66.02" width="0.64" height="1.62" fill="#fff"/><rect x="207.21" y="68.57" width="0.7" height="0.93" fill="#fff"/><rect x="213.01" y="66.02" width="0.64" height="1.62" fill="#fff"/><rect x="212.78" y="68.57" width="0.7" height="0.93" fill="#fff"/><rect x="208.55" y="63.52" width="0.64" height="0.7" fill="#fff"/><rect x="212.84" y="63.52" width="0.64" height="0.7" fill="#fff"/><path d="M238.6,71.8V76.2L241.4,78.5H250.6L253.4,76.2V71.8Z" fill="#008a96" stroke="#000" stroke-width="1.2"/><path d="M238.6,74L241.4,76.4H250.6L253.4,74" fill="none" stroke="#000" stroke-width="1.02"/><path d="M241.4,69.6H250.6L253.4,71.8L250.6,74.3H241.4L238.6,71.8Z" fill="#00e4ee" stroke="#000" stroke-width="1.2"/><path d="M240,66.8l5.6,5.6M245.6,66.8l-5.6,5.6" stroke="#e81010" stroke-width="2.2"/><path d="M241,66.6C241.4,62.4 246.6,61.4 248.2,65" fill="none" stroke="#0000b0" stroke-width="1.3"/><polygon points="250.6,63 250.6,67.6 245.6,66.4" fill="#0000b0"/><text x="281" y="78.4" font-family="Liberation Sans,sans-serif" font-weight="bold" font-size="16" fill="#0a0a9a">?</text><rect x="178.0" y="499" width="1.3" height="32" fill="#9a9a9a"/><rect x="314.0" y="499" width="1.3" height="32" fill="#9a9a9a"/><rect x="450.0" y="499" width="1.3" height="32" fill="#9a9a9a"/><rect x="554.0" y="499" width="1.3" height="32" fill="#9a9a9a"/><rect x="594.0" y="499" width="1.3" height="32" fill="#9a9a9a"/><rect x="634.0" y="499" width="1.3" height="32" fill="#9a9a9a"/><rect x="136.7" y="506.7" width="13" height="13" fill="#e8e8e8" stroke="#000" stroke-width="1.4"/><path d="M143.2,506v14M136,513.2h14" stroke="#000" stroke-width="1.4"/><path d="M150.4,513.2h3.2M143.2,520.4v3.2" stroke="#e00000" stroke-width="1.2"/><path d="M153,507v4.6M153,514.8v4.6M137,523h4.6M144.8,523h4.6" stroke="#0000d0" stroke-width="1.3"/><polygon points="151.6,508.2 153,506 154.4,508.2" fill="#0000d0"/><polygon points="151.6,518.2 153,520.4 154.4,518.2" fill="#0000d0"/><polygon points="138.2,521.6 136,523 138.2,524.4" fill="#0000d0"/><polygon points="148.2,521.6 150.4,523 148.2,524.4" fill="#0000d0"/><polygon points="163.5,513.6 171.5,513.6 167.5,518" fill="#000"/><path d="M196.4,514.6V511.8C196.4,507.6 203.2,507.6 203.2,511.8V514.6" fill="none" stroke="#000" stroke-width="2.6"/><path d="M196.4,514.6V511.8C196.4,507.6 203.2,507.6 203.2,511.8V514.6" fill="none" stroke="#c8c8c8" stroke-width="0.9"/><rect x="193.6" y="514.2" width="12.4" height="8.4" rx="2.6" fill="#b4b4b4" stroke="#000" stroke-width="1.2"/><path d="M194.6,516.6h10.4M194.6,518.6h10.4M194.6,520.6h10.4" stroke="#6e6e6e" stroke-width="0.9"/><path d="M198.2,516.8h3.2M199.8,516.8v3.6" stroke="#000" stroke-width="1.6"/><path d="M227,515.6h9.2M231.6,511v9.2" stroke="#c6c6e6" stroke-width="2.2"/><path d="M259,515.6h9.2" stroke="#c6c6e6" stroke-width="2.2"/><path d="M288,517.4L292.4,521.4L303,508.6" fill="none" stroke="#d6d6ea" stroke-width="2.4"/><path d="M287.6,516L292,520L302.6,507.6" fill="none" stroke="#b8e2b8" stroke-width="2.4"/><polygon points="328,508.4 341.4,508.4 334.7,514.0" fill="#b6f0b6" stroke="#c8c8c8" stroke-width="1"/><polygon points="328,514.0 341.4,514.0 334.7,519.6" fill="#b6f0b6" stroke="#c8c8c8" stroke-width="1"/><polygon points="360,508.4 373.4,508.4 366.7,514.0" fill="#b6f0b6" stroke="#c8c8c8" stroke-width="1"/><polygon points="360,514.0 373.4,514.0 366.7,519.6" fill="#b6f0b6" stroke="#c8c8c8" stroke-width="1"/><path d="M360.6,521.4h12.2" stroke="#c8c8c8" stroke-width="1.3"/><path d="M394.55,508.2H397.88V520.55H392.0V515.06L394.55,510.75Z" fill="#000"/><path d="M404.94,508.2H401.6V520.55H407.48V515.06L404.94,510.75Z" fill="#000"/><rect x="397.49" y="511.73" width="4.51" height="4.31" fill="#000"/><rect x="393.76" y="513.3" width="1.08" height="2.74" fill="#fff"/><rect x="393.37" y="517.61" width="1.18" height="1.57" fill="#fff"/><rect x="403.17" y="513.3" width="1.08" height="2.74" fill="#fff"/><rect x="402.78" y="517.61" width="1.18" height="1.57" fill="#fff"/><rect x="395.63" y="509.08" width="1.08" height="1.18" fill="#fff"/><rect x="402.88" y="509.08" width="1.08" height="1.18" fill="#fff"/><path d="M427.6,516L437.20000000000005,506L441.0,509L432.0,519Z" fill="#f4f4c0" stroke="#d8d8d8" stroke-width="0.8"/><path d="M427.6,516L431.0,512.4L435.0,515.6L432.0,519Z" fill="#f4b4d4"/><path d="M432.6,510.8L436.6,514" stroke="#b8e8b8" stroke-width="1.6"/><path d="M463.20000000000005,518.4L469.6,513.8000000000001L475.6,517.0L469.0,522.0Z" fill="#fff" stroke="#000" stroke-width="0.9"/><path d="M463.20000000000005,516.6L469.6,512.0L475.6,515.2L469.0,520.2Z" fill="#fff" stroke="#000" stroke-width="0.9"/><path d="M463.20000000000005,514.8L469.6,510.20000000000005L475.6,513.4L469.0,518.4Z" fill="#fff" stroke="#000" stroke-width="0.9"/><path d="M463.20000000000005,513.0L469.6,508.40000000000003L475.6,511.6L469.0,516.6Z" fill="#f6ee50" stroke="#000" stroke-width="0.9"/><path d="M470.6,513.0H476.20000000000005L478.6,515.4V522.0H470.6Z" fill="#fff" stroke="#000" stroke-width="1.2"/><path d="M476.20000000000005,513.0V515.4H478.6" fill="none" stroke="#000" stroke-width="0.96"/><path d="M472.40000000000003,516.6h2.4" stroke="#000" stroke-width="1"/><path d="M472.40000000000003,518.4h4.6" stroke="#000" stroke-width="1"/><path d="M472.40000000000003,520.2h4.6" stroke="#000" stroke-width="1"/><polygon points="496,511.4 509.4,511.4 502.7,518.4" fill="#f0f0d0" stroke="#d0d0d0" stroke-width="1"/><polygon points="528,518.4 541.4,518.4 534.7,511.4" fill="#f0f0d0" stroke="#d0d0d0" stroke-width="1"/><path d="M569,516.6H572.4M571,516.6L574,512.6H576M575.4,512.6L578,509.0H579.4M576,512.6H579.4M576.6,516.6H579.4M571,516.6L573.4,520.6" fill="none" stroke="#00008a" stroke-width="1.1"/><rect x="565" y="515.1999999999999" width="4.4" height="2.8" fill="#fff" stroke="#00008a" stroke-width="1.1"/><rect x="572.4" y="515.1999999999999" width="4.4" height="2.8" fill="#f4e840" stroke="#00008a" stroke-width="1.1"/><rect x="572.4" y="511.2" width="4.4" height="2.8" fill="#fff" stroke="#00008a" stroke-width="1.1"/><rect x="579.4" y="507.59999999999997" width="4.4" height="2.8" fill="#fff" stroke="#00008a" stroke-width="1.1"/><rect x="579.4" y="511.2" width="4.4" height="2.8" fill="#fff" stroke="#00008a" stroke-width="1.1"/><rect x="579.4" y="515.1999999999999" width="4.4" height="2.8" fill="#fff" stroke="#00008a" stroke-width="1.1"/><rect x="572.4" y="519.1999999999999" width="4.4" height="2.8" fill="#fff" stroke="#00008a" stroke-width="1.1"/><rect x="608" y="508" width="14" height="14" rx="1" fill="#000"/><rect x="609.2" y="509.2" width="11.6" height="11.6" fill="#c6c61e"/><rect x="611" y="508.8" width="8.6" height="6" fill="#dcd3d3"/><rect x="611" y="516.4" width="8.6" height="5" fill="#000"/><rect x="616.8" y="518" width="2" height="2.8" fill="#e0d8d8"/><rect x="620" y="509.2" width="1" height="1" fill="#eee"/><path d="M648.6,515.8V520.2L651.4,522.5H660.6L663.4,520.2V515.8Z" fill="#008a96" stroke="#000" stroke-width="1.2"/><path d="M648.6,518.0L651.4,520.4H660.6L663.4,518.0" fill="none" stroke="#000" stroke-width="1.02"/><path d="M651.4,513.6H660.6L663.4,515.8L660.6,518.3H651.4L648.6,515.8Z" fill="#00e4ee" stroke="#000" stroke-width="1.2"/><rect x="654.2" y="507.20000000000005" width="9.6" height="4.2" fill="#fff" stroke="#000" stroke-width="1.1"/><rect x="655.6" y="508.6" width="2.6" height="1.4" fill="#e01414"/><path d="M649.4,512.2V509.6H651.6" fill="none" stroke="#000" stroke-width="1.1"/><polygon points="651,507.6 653.4,509.6 651,511.6" fill="#000"/><path d="M684.0,508L681.4,510.6V522H694.0L696.2,519.8" fill="none" stroke="#000" stroke-width="1.2"/><path d="M684.0,508V519.8H696.2" fill="none" stroke="#888" stroke-width="0.9"/><rect x="684.0" y="513" width="3.2" height="7.4" fill="#1414d8" stroke="#000" stroke-width="0.8"/><rect x="687.8000000000001" y="508.8" width="3.2" height="11.6" fill="#f0e010" stroke="#000" stroke-width="0.8"/><rect x="691.6" y="511" width="3.2" height="9.4" fill="#e01414" stroke="#000" stroke-width="0.8"/><polygon points="707.6,513.8 715.6,513.8 711.6,518" fill="#000"/><path d="M9.85,143.0H12.26V151.95H8.0V147.97L9.85,144.85Z" fill="#000"/><path d="M17.37,143.0H14.96V151.95H19.22V147.97L17.37,144.85Z" fill="#000"/><rect x="11.98" y="145.56" width="3.27" height="3.12" fill="#000"/><rect x="9.28" y="146.69" width="0.78" height="1.99" fill="#fff"/><rect x="8.99" y="149.82" width="0.85" height="1.14" fill="#fff"/><rect x="16.09" y="146.69" width="0.78" height="1.99" fill="#fff"/><rect x="15.81" y="149.82" width="0.85" height="1.14" fill="#fff"/><rect x="10.63" y="143.64" width="0.78" height="0.85" fill="#fff"/><rect x="15.88" y="143.64" width="0.78" height="0.85" fill="#fff"/><path d="M32,150.2L36.6,145.6" stroke="#000" stroke-width="2.6" stroke-linecap="round"/><circle cx="37.2" cy="145.4" r="2" fill="#f0f0f0" stroke="#000" stroke-width="1.4"/><rect x="31.6" y="149.6" width="1" height="1" fill="#fff"/><polygon points="35.6,148.2 43.2,148.2 40.2,151.6 40.2,154.8 38.4,154.8 38.4,151.6" fill="#000"/><path d="M54,150.2L58.6,145.6" stroke="#000" stroke-width="2.6" stroke-linecap="round"/><circle cx="59.2" cy="145.4" r="2" fill="#f0f0f0" stroke="#000" stroke-width="1.4"/><rect x="53.6" y="149.6" width="1" height="1" fill="#fff"/><path d="M58.6,153.6V149.2H61L61.8,150.2H64.8V153.6Z" fill="#9a9a9a" stroke="#000" stroke-width="1.2"/><path d="M202.52,911.6H205.04V920.92H200.6V916.78L202.52,913.52Z" fill="#000"/><path d="M210.37,911.6H207.85V920.92H212.29V916.78L210.37,913.52Z" fill="#000"/><rect x="204.74" y="914.26" width="3.4" height="3.26" fill="#000"/><rect x="201.93" y="915.45" width="0.81" height="2.07" fill="#fff"/><rect x="201.64" y="918.7" width="0.89" height="1.18" fill="#fff"/><rect x="209.04" y="915.45" width="0.81" height="2.07" fill="#fff"/><rect x="208.74" y="918.7" width="0.89" height="1.18" fill="#fff"/><rect x="203.34" y="912.27" width="0.81" height="0.89" fill="#fff"/><rect x="208.81" y="912.27" width="0.81" height="0.89" fill="#fff"/><polygon points="234,914.4 247.4,914.4 240.7,921" fill="#f4f040" stroke="#000" stroke-width="1"/><polygon points="262,922 268.5,915.2 275,922" fill="#f4f040" stroke="#000" stroke-width="1"/><path d="M291,912.4h4M296,912.4h7M291,914.8h7M299,914.8h4M291,917.2h3M295,917.2h8M291,919.4h12" stroke="#000" stroke-width="1"/><path d="M320,922L329,913.6H333L333.4,915.6L326,922" fill="#fff" stroke="#000" stroke-width="1.1"/><rect x="358.6" y="913.6" width="11.6" height="9" fill="#fff" stroke="#000" stroke-width="1.2"/><rect x="359.2" y="914" width="10.4" height="1.6" fill="#00008a"/><path d="M361,918.4h6" stroke="#000" stroke-width="1"/><text x="387.4" y="922" font-family="Liberation Sans,sans-serif" font-size="11" fill="#000" textLength="16.6" lengthAdjust="spacingAndGlyphs">ABC</text><rect x="419" y="914" width="12" height="8" fill="#000"/><text x="419.6" y="922" font-family="Liberation Sans,sans-serif" font-weight="bold" font-size="11" fill="#fff">Ab</text><path d="M431.6,918.6h4" stroke="#000" stroke-width="1.2"/><text x="451" y="920.6" font-family="Liberation Sans,sans-serif" font-size="11" fill="#000" textLength="18.6" lengthAdjust="spacingAndGlyphs">"AB"</text></svg>
</body></html>
